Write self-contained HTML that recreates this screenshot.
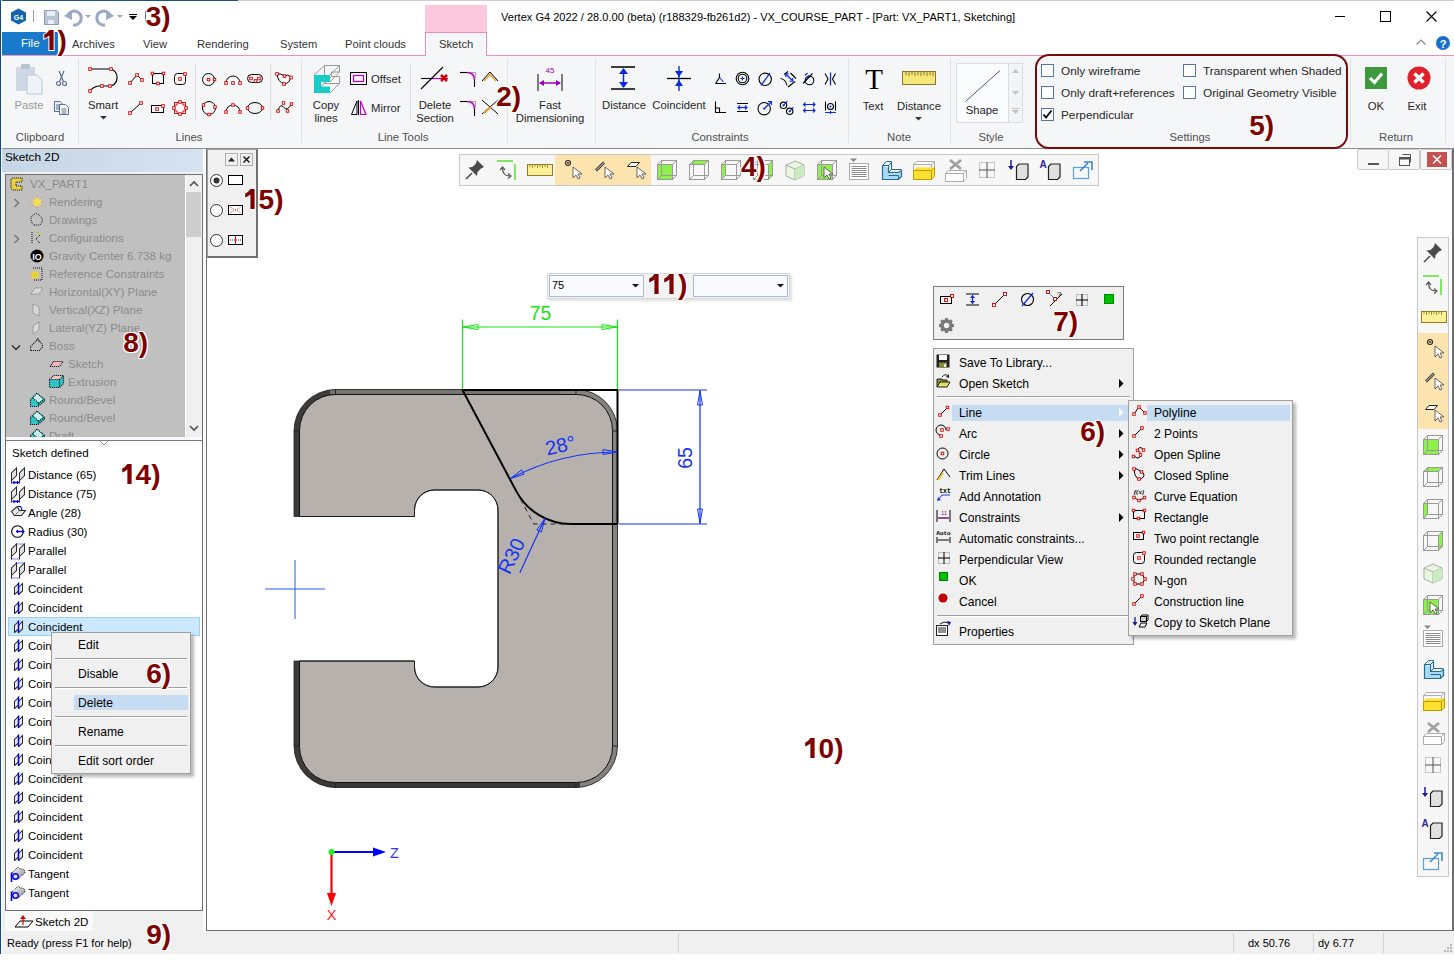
<!DOCTYPE html><html><head><meta charset="utf-8"><style>
*{margin:0;padding:0;box-sizing:border-box}
html,body{width:1454px;height:960px;overflow:hidden;background:#fff;font-family:"Liberation Sans",sans-serif;}
.t{position:absolute;white-space:nowrap;line-height:1;}
.r{position:absolute;}
.s{position:absolute;overflow:visible}
.ann{position:absolute;font-family:"Liberation Sans",sans-serif;font-weight:bold;color:#800000;line-height:1;white-space:nowrap;text-shadow:1px 0 #fff,-1px 0 #fff,0 1px #fff,0 -1px #fff,1px 1px #fff,-1px -1px #fff,1px -1px #fff,-1px 1px #fff}
</style></head><body><div class="r" style="left:0px;top:0px;width:1454px;height:1px;background:#cfcfcf"></div><div class="r" style="left:0px;top:0px;width:238px;height:1px;background:#1b4f8f"></div><div class="r" style="left:0px;top:0px;width:1px;height:956px;background:#0a4a90"></div><div class="r" style="left:1px;top:0px;width:1px;height:956px;background:#ffffff"></div><div class="t" style="left:501px;top:11.65px;font-size:11.05px;color:#000;">Vertex G4 2022 / 28.0.00 (beta) (r188329-fb261d2) - VX_COURSE_PART - [Part: VX_PART1, Sketching]</div><svg class="s" style="left:10px;top:8px;" width="17" height="17" viewBox="0 0 17 17"><polygon points="8.5,0.5 16,4.5 16,12.5 8.5,16.5 1,12.5 1,4.5" fill="#1565b0"/><text x="8.5" y="11.5" font-size="7" font-weight="bold" fill="#fff" text-anchor="middle" font-family="Liberation Sans">G4</text></svg><div class="r" style="left:33px;top:10px;width:1px;height:12px;background:#a0a0a0"></div><svg class="s" style="left:44px;top:10px;" width="15" height="15" viewBox="0 0 15 15"><path d="M0.5 0.5h12l2 2v12h-14z" fill="#b8c4d6" stroke="#8e9db5"/><rect x="3" y="1" width="8" height="5" fill="#e8edf4"/><rect x="4" y="10" width="6" height="4" fill="#e8edf4"/></svg><svg class="s" style="left:64px;top:9px;" width="18" height="17" viewBox="0 0 18 17"><path d="M4 6 A7 7 0 1 1 9 16" fill="none" stroke="#9aaac2" stroke-width="3"/><polygon points="0,7 8,1 8,11" fill="#9aaac2"/></svg><svg class="s" style="left:85px;top:15px;" width="6" height="4" viewBox="0 0 6 4"><polygon points="0,0 6,0 3,3" fill="#a8a8a8"/></svg><svg class="s" style="left:96px;top:9px;" width="18" height="17" viewBox="0 0 18 17"><path d="M14 6 A7 7 0 1 0 9 16" fill="none" stroke="#9aaac2" stroke-width="3"/><polygon points="18,7 10,1 10,11" fill="#9aaac2"/></svg><svg class="s" style="left:117px;top:15px;" width="6" height="4" viewBox="0 0 6 4"><polygon points="0,0 6,0 3,3" fill="#a8a8a8"/></svg><div class="r" style="left:129px;top:14px;width:8px;height:1px;background:#000"></div><svg class="s" style="left:129px;top:16px;" width="8" height="5" viewBox="0 0 8 5"><polygon points="0,0 8,0 4,4" fill="#000"/></svg><div class="r" style="left:145px;top:11px;width:1px;height:11px;background:#666"></div><div class="r" style="left:1335px;top:16px;width:10px;height:1px;background:#000"></div><div class="r" style="left:1380px;top:11px;width:11px;height:11px;border:1px solid #000"></div><svg class="s" style="left:1426px;top:11px;" width="11" height="11" viewBox="0 0 11 11"><path d="M0.5 0.5L10.5 10.5M10.5 0.5L0.5 10.5" stroke="#000" stroke-width="1.1"/></svg><div class="r" style="left:425px;top:5px;width:62px;height:27px;background:#fcc8dd"></div><div class="r" style="left:2px;top:32px;width:56px;height:23px;background:#1979ca"></div><div class="t" style="left:21px;top:38.27px;font-size:11.5px;color:#fff;">File</div><div class="t" style="left:72px;top:38.52px;font-size:11.2px;color:#333;">Archives</div><div class="t" style="left:143px;top:38.52px;font-size:11.2px;color:#333;">View</div><div class="t" style="left:197px;top:38.52px;font-size:11.2px;color:#333;">Rendering</div><div class="t" style="left:280px;top:38.52px;font-size:11.2px;color:#333;">System</div><div class="t" style="left:345px;top:38.52px;font-size:11.2px;color:#333;">Point clouds</div><div class="r" style="left:2px;top:55px;width:424px;height:1px;background:#f38dba"></div><div class="r" style="left:486px;top:55px;width:968px;height:1px;background:#f38dba"></div><div class="r" style="left:425px;top:32px;width:1px;height:24px;background:#f38dba"></div><div class="r" style="left:486px;top:32px;width:1px;height:24px;background:#f38dba"></div><div class="r" style="left:426px;top:33px;width:60px;height:23px;background:#f5f6f7"></div><div class="r" style="left:425px;top:32px;width:62px;height:1px;background:#f38dba"></div><div class="t" style="left:439px;top:38.52px;font-size:11.2px;color:#333;">Sketch</div><svg class="s" style="left:1416px;top:39px;" width="10" height="6" viewBox="0 0 10 6"><path d="M0.5 5.5L5 1L9.5 5.5" fill="none" stroke="#8a8a8a" stroke-width="1.2"/></svg><svg class="s" style="left:1436px;top:36px;" width="14" height="14" viewBox="0 0 14 14"><circle cx="7" cy="7" r="7" fill="#1a6fc9"/><text x="7" y="11.5" font-size="11" font-weight="bold" fill="#fff" text-anchor="middle" font-family="Liberation Sans">?</text></svg><div class="r" style="left:2px;top:56px;width:1452px;height:92px;background:#f5f6f7"></div><div class="r" style="left:2px;top:148px;width:1452px;height:1px;background:#8c8c8c"></div><div class="r" style="left:78px;top:58px;width:1px;height:85px;background:#e2e3e4"></div><div class="r" style="left:301px;top:58px;width:1px;height:85px;background:#e2e3e4"></div><div class="r" style="left:507px;top:58px;width:1px;height:85px;background:#e2e3e4"></div><div class="r" style="left:595px;top:58px;width:1px;height:85px;background:#e2e3e4"></div><div class="r" style="left:848px;top:58px;width:1px;height:85px;background:#e2e3e4"></div><div class="r" style="left:950px;top:58px;width:1px;height:85px;background:#e2e3e4"></div><div class="r" style="left:1350px;top:58px;width:1px;height:85px;background:#e2e3e4"></div><div class="r" style="left:1445px;top:58px;width:1px;height:85px;background:#e2e3e4"></div><div class="r" style="left:195px;top:64px;width:1px;height:56px;background:#dcdcdc"></div><div class="r" style="left:270px;top:64px;width:1px;height:56px;background:#dcdcdc"></div><div class="r" style="left:410px;top:64px;width:1px;height:56px;background:#dcdcdc"></div><div class="t" style="left:-160px;width:400px;text-align:center;top:132.43px;font-size:11.3px;color:#505050;">Clipboard</div><div class="t" style="left:-11px;width:400px;text-align:center;top:132.43px;font-size:11.3px;color:#505050;">Lines</div><div class="t" style="left:203px;width:400px;text-align:center;top:132.43px;font-size:11.3px;color:#505050;">Line Tools</div><div class="t" style="left:520px;width:400px;text-align:center;top:132.43px;font-size:11.3px;color:#505050;">Constraints</div><div class="t" style="left:699px;width:400px;text-align:center;top:132.43px;font-size:11.3px;color:#505050;">Note</div><div class="t" style="left:791px;width:400px;text-align:center;top:132.43px;font-size:11.3px;color:#505050;">Style</div><div class="t" style="left:990px;width:400px;text-align:center;top:132.43px;font-size:11.3px;color:#505050;">Settings</div><div class="t" style="left:1196px;width:400px;text-align:center;top:132.43px;font-size:11.3px;color:#505050;">Return</div><svg class="s" style="left:15px;top:63px;" width="29" height="32" viewBox="0 0 29 32"><rect x="1" y="4" width="19" height="24" rx="1" fill="#cfd8e4"/><rect x="6" y="1" width="9" height="5" rx="1" fill="#b9c4d2"/><path d="M12 12h10l5 5v14h-15z" fill="#f0f4f9" stroke="#b9c4d2"/></svg><div class="t" style="left:-171px;width:400px;text-align:center;top:100.43px;font-size:11.3px;color:#9a9a9a;">Paste</div><svg class="s" style="left:56px;top:71px;" width="11" height="16" viewBox="0 0 11 16"><circle cx="2.5" cy="12.5" r="2" fill="none" stroke="#5a6f94" stroke-width="1.2"/><circle cx="8.5" cy="12.5" r="2" fill="none" stroke="#5a6f94" stroke-width="1.2"/><path d="M3.5 10.5L8 0M7.5 10.5L3 0" stroke="#5a6f94" stroke-width="1.2"/></svg><svg class="s" style="left:54px;top:101px;" width="16" height="14" viewBox="0 0 16 14"><path d="M0.5 0.5H6L8.5 3V10.5H0.5Z" fill="#eef2f7" stroke="#5a6f94"/><path d="M2 4H5M2 6H6M2 8H6" stroke="#5a6f94"/><path d="M5.5 3.5H11.5L14.5 6.5V13.5H5.5Z" fill="#fff" stroke="#5a6f94"/><path d="M7.5 8H12.5M7.5 10H12.5M7.5 12H12.5" stroke="#5a6f94"/></svg><svg class="s" style="left:88px;top:66px;" width="32" height="28" viewBox="0 0 32 28"><path d="M2 3H23 A9 9 0 0 1 23 20 H10 Q5 21 2 25" fill="none" stroke="#000" stroke-width="1.2"/><rect x="0.7" y="1.7" width="2.6" height="2.6" fill="#fff" stroke="#d10000" stroke-width="0.9"/><rect x="21.7" y="1.7" width="2.6" height="2.6" fill="#fff" stroke="#d10000" stroke-width="0.9"/><rect x="0.7" y="23.7" width="2.6" height="2.6" fill="#fff" stroke="#d10000" stroke-width="0.9"/><rect x="12.7" y="18.7" width="2.6" height="2.6" fill="#fff" stroke="#d10000" stroke-width="0.9"/><rect x="20.7" y="18.7" width="2.6" height="2.6" fill="#fff" stroke="#d10000" stroke-width="0.9"/></svg><div class="t" style="left:-97px;width:400px;text-align:center;top:100.43px;font-size:11.3px;color:#262626;">Smart</div><svg class="s" style="left:100px;top:116px;" width="7" height="4" viewBox="0 0 7 4"><polygon points="0,0 7,0 3.5,3.5" fill="#333"/></svg><svg class="s" style="left:128px;top:73px;" width="16" height="12" viewBox="0 0 16 12"><path d="M2 10L9 2L14 7" fill="none" stroke="#000"/><rect x="0.7" y="8.7" width="2.6" height="2.6" fill="#fff" stroke="#d10000" stroke-width="0.9"/><rect x="7.7" y="0.7" width="2.6" height="2.6" fill="#fff" stroke="#d10000" stroke-width="0.9"/><rect x="12.7" y="5.7" width="2.6" height="2.6" fill="#fff" stroke="#d10000" stroke-width="0.9"/></svg><svg class="s" style="left:151px;top:72px;" width="14" height="14" viewBox="0 0 14 14"><rect x="1.5" y="1.5" width="11" height="10" fill="none" stroke="#000"/><rect x="0.19999999999999996" y="0.19999999999999996" width="2.6" height="2.6" fill="#fff" stroke="#d10000" stroke-width="0.9"/><rect x="11.2" y="0.19999999999999996" width="2.6" height="2.6" fill="#fff" stroke="#d10000" stroke-width="0.9"/><rect x="5.7" y="10.2" width="2.6" height="2.6" fill="#fff" stroke="#d10000" stroke-width="0.9"/></svg><svg class="s" style="left:173px;top:72px;" width="14" height="14" viewBox="0 0 14 14"><rect x="1.5" y="1.5" width="11" height="11" rx="3" fill="none" stroke="#000"/><rect x="5.7" y="5.7" width="2.6" height="2.6" fill="#fff" stroke="#d10000" stroke-width="0.9"/><rect x="10.7" y="0.7" width="2.6" height="2.6" fill="#fff" stroke="#d10000" stroke-width="0.9"/></svg><svg class="s" style="left:201px;top:72px;" width="15" height="15" viewBox="0 0 15 15"><circle cx="7.5" cy="7.5" r="6" fill="none" stroke="#000"/><rect x="6.25" y="6.25" width="2.5" height="2.5" fill="#fff" stroke="#d10000" stroke-width="0.9"/><rect x="12.25" y="6.25" width="2.5" height="2.5" fill="#fff" stroke="#d10000" stroke-width="0.9"/></svg><svg class="s" style="left:224px;top:73px;" width="18" height="12" viewBox="0 0 18 12"><path d="M2 10A7 7 0 0 1 16 10" fill="none" stroke="#000"/><rect x="0.7" y="8.7" width="2.6" height="2.6" fill="#fff" stroke="#d10000" stroke-width="0.9"/><rect x="7.7" y="8.7" width="2.6" height="2.6" fill="#fff" stroke="#d10000" stroke-width="0.9"/><rect x="14.7" y="8.7" width="2.6" height="2.6" fill="#fff" stroke="#d10000" stroke-width="0.9"/></svg><svg class="s" style="left:246px;top:72px;" width="18" height="13" viewBox="0 0 18 13"><rect x="1.5" y="2.5" width="15" height="8" rx="4" fill="none" stroke="#000"/><rect x="3.7" y="5.2" width="2.6" height="2.6" fill="#fff" stroke="#d10000" stroke-width="0.9"/><rect x="8.2" y="7.7" width="2.6" height="2.6" fill="#fff" stroke="#d10000" stroke-width="0.9"/><rect x="11.7" y="5.2" width="2.6" height="2.6" fill="#fff" stroke="#d10000" stroke-width="0.9"/></svg><svg class="s" style="left:275px;top:71px;" width="18" height="16" viewBox="0 0 18 16"><path d="M2 3Q6 2 9 5Q13 3 16 6Q14 13 9 13Q3 11 2 3Z" fill="none" stroke="#000"/><rect x="0.7" y="1.7" width="2.6" height="2.6" fill="#fff" stroke="#d10000" stroke-width="0.9"/><rect x="8.2" y="3.7" width="2.6" height="2.6" fill="#fff" stroke="#d10000" stroke-width="0.9"/><rect x="14.7" y="5.2" width="2.6" height="2.6" fill="#fff" stroke="#d10000" stroke-width="0.9"/><rect x="7.7" y="11.7" width="2.6" height="2.6" fill="#fff" stroke="#d10000" stroke-width="0.9"/></svg><svg class="s" style="left:128px;top:101px;" width="16" height="14" viewBox="0 0 16 14"><path d="M2 12L13 2" stroke="#000"/><rect x="0.7" y="10.7" width="2.6" height="2.6" fill="#fff" stroke="#d10000" stroke-width="0.9"/><rect x="11.7" y="0.7" width="2.6" height="2.6" fill="#fff" stroke="#d10000" stroke-width="0.9"/></svg><svg class="s" style="left:150px;top:104px;" width="16" height="10" viewBox="0 0 16 10"><rect x="1.5" y="1.5" width="12" height="7" fill="none" stroke="#000"/><rect x="5.7" y="3.7" width="2.6" height="2.6" fill="#fff" stroke="#d10000" stroke-width="0.9"/><rect x="11.7" y="0.7" width="2.6" height="2.6" fill="#fff" stroke="#d10000" stroke-width="0.9"/></svg><svg class="s" style="left:172px;top:100px;" width="16" height="16" viewBox="0 0 16 16"><circle cx="8" cy="8" r="6" fill="none" stroke="#000"/><rect x="12.75" y="6.75" width="2.5" height="2.5" fill="#fff" stroke="#d10000" stroke-width="0.9"/><rect x="10.992632895067418" y="10.992648479156841" width="2.5" height="2.5" fill="#fff" stroke="#d10000" stroke-width="0.9"/><rect x="6.74997796076938" y="12.749999999959522" width="2.5" height="2.5" fill="#fff" stroke="#d10000" stroke-width="0.9"/><rect x="2.5073359368109793" y="10.992617310920751" width="2.5" height="2.5" fill="#fff" stroke="#d10000" stroke-width="0.9"/><rect x="0.7500000001619096" y="6.74995592153876" width="2.5" height="2.5" fill="#fff" stroke="#d10000" stroke-width="0.9"/><rect x="2.50739827328316" y="2.507320352836042" width="2.5" height="2.5" fill="#fff" stroke="#d10000" stroke-width="0.9"/><rect x="6.750066117691858" y="0.7500000003642961" width="2.5" height="2.5" fill="#fff" stroke="#d10000" stroke-width="0.9"/><rect x="10.99269523108165" y="2.5074138575443126" width="2.5" height="2.5" fill="#fff" stroke="#d10000" stroke-width="0.9"/></svg><svg class="s" style="left:201px;top:100px;" width="16" height="16" viewBox="0 0 16 16"><circle cx="8" cy="8" r="6.5" fill="none" stroke="#000"/><rect x="1.25" y="3.75" width="2.5" height="2.5" fill="#fff" stroke="#d10000" stroke-width="0.9"/><rect x="6.75" y="13.25" width="2.5" height="2.5" fill="#fff" stroke="#d10000" stroke-width="0.9"/><rect x="12.75" y="5.75" width="2.5" height="2.5" fill="#fff" stroke="#d10000" stroke-width="0.9"/></svg><svg class="s" style="left:224px;top:102px;" width="18" height="12" viewBox="0 0 18 12"><path d="M2 10A7 7 0 0 1 16 10" fill="none" stroke="#000"/><rect x="0.75" y="8.75" width="2.5" height="2.5" fill="#fff" stroke="#d10000" stroke-width="0.9"/><rect x="7.75" y="1.75" width="2.5" height="2.5" fill="#fff" stroke="#d10000" stroke-width="0.9"/><rect x="14.75" y="8.75" width="2.5" height="2.5" fill="#fff" stroke="#d10000" stroke-width="0.9"/></svg><svg class="s" style="left:246px;top:101px;" width="18" height="14" viewBox="0 0 18 14"><ellipse cx="9" cy="7" rx="7.5" ry="5.5" fill="none" stroke="#000"/><rect x="0.25" y="5.75" width="2.5" height="2.5" fill="#fff" stroke="#d10000" stroke-width="0.9"/><rect x="15.25" y="5.75" width="2.5" height="2.5" fill="#fff" stroke="#d10000" stroke-width="0.9"/></svg><svg class="s" style="left:276px;top:100px;" width="18" height="16" viewBox="0 0 18 16"><path d="M2 11Q4 3 7.5 7Q11 12 15.5 4" fill="none" stroke="#000"/><rect x="0.75" y="9.75" width="2.5" height="2.5" fill="#fff" stroke="#d10000" stroke-width="0.9"/><rect x="6.25" y="1.75" width="2.5" height="2.5" fill="#fff" stroke="#d10000" stroke-width="0.9"/><rect x="10.25" y="9.75" width="2.5" height="2.5" fill="#fff" stroke="#d10000" stroke-width="0.9"/><rect x="14.25" y="2.75" width="2.5" height="2.5" fill="#fff" stroke="#d10000" stroke-width="0.9"/></svg><svg class="s" style="left:312px;top:64px;" width="30" height="31" viewBox="0 0 30 31"><path d="M12.5 1.5H27.5V8H19.5V12.5H27.5V19.5H12.5Z" fill="none" stroke="#9a9a9a"/><path d="M2 11L12.5 1.5M18 11L27.5 1.5M18 29L27.5 19.5M9 22.5L19.5 12.5M18 18L27.5 8" stroke="#9a9a9a"/><path d="M2 11H18V18H9V22.5H18V29H2Z" fill="#18cdc8"/></svg><div class="t" style="left:126px;width:400px;text-align:center;top:99.93px;font-size:11.3px;color:#262626;">Copy</div><div class="t" style="left:126px;width:400px;text-align:center;top:112.93px;font-size:11.3px;color:#262626;">lines</div><svg class="s" style="left:350px;top:72px;" width="18" height="14" viewBox="0 0 18 14"><rect x="0.5" y="0.5" width="16" height="12" fill="none" stroke="#000"/><rect x="3.5" y="3.5" width="10" height="6" fill="none" stroke="#c000c0" stroke-width="1.2"/></svg><div class="t" style="left:371px;top:74.43px;font-size:11.3px;color:#262626;">Offset</div><svg class="s" style="left:351px;top:100px;" width="16" height="15" viewBox="0 0 16 15"><path d="M0.5 14.5L6 1V14.5Z" fill="none" stroke="#000"/><path d="M7.5 0V15" stroke="#000"/><path d="M9.5 1L15 14.5H9.5Z" fill="none" stroke="#c000c0" stroke-width="1.2"/></svg><div class="t" style="left:371px;top:103.43px;font-size:11.3px;color:#262626;">Mirror</div><svg class="s" style="left:420px;top:66px;" width="30" height="24" viewBox="0 0 30 24"><path d="M1 12.5H11" stroke="#000" stroke-width="1.1"/><path d="M11 12.5H28" stroke="#c000c0" stroke-width="1.2"/><path d="M1 23L23 1" stroke="#000" stroke-width="1.1"/><path d="M21 9L27 15M27 9L21 15" stroke="#d00000" stroke-width="2.6"/></svg><div class="t" style="left:235px;width:400px;text-align:center;top:99.93px;font-size:11.3px;color:#262626;">Delete</div><div class="t" style="left:235px;width:400px;text-align:center;top:112.93px;font-size:11.3px;color:#262626;">Section</div><svg class="s" style="left:460px;top:71px;" width="17" height="17" viewBox="0 0 17 17"><path d="M0 1.5H7" stroke="#000" stroke-width="1.1"/><path d="M7 1.5H15.5V7" fill="none" stroke="#a0a0a0"/><path d="M7 1.5Q14.5 1.5 14.5 9" fill="none" stroke="#c000c0" stroke-width="1.6"/><path d="M14.5 9V16" stroke="#000" stroke-width="1.1"/></svg><svg class="s" style="left:460px;top:100px;" width="17" height="17" viewBox="0 0 17 17"><path d="M0 1.5H7" stroke="#000" stroke-width="1.1"/><path d="M7 1.5H15.5V7" fill="none" stroke="#a0a0a0"/><path d="M7 1.5Q14.5 1.5 14.5 9" fill="none" stroke="#c000c0" stroke-width="1.6"/><path d="M14.5 9V16" stroke="#000" stroke-width="1.1"/></svg><svg class="s" style="left:481px;top:70px;" width="18" height="12" viewBox="0 0 18 12"><path d="M1 11L9 2L17 11" fill="none" stroke="#000"/><path d="M3 11L9 4.5L15 11" fill="none" stroke="#f0a020" stroke-width="1.5"/></svg><svg class="s" style="left:481px;top:99px;" width="18" height="16" viewBox="0 0 18 16"><path d="M1 1L17 15M17 1L1 15" fill="none" stroke="#000"/><path d="M3 14L10 8" stroke="#f0a020" stroke-width="2"/></svg><svg class="s" style="left:537px;top:66px;" width="26" height="25" viewBox="0 0 26 25"><path d="M1 8V25M25 8V25" stroke="#000"/><path d="M3 17H23" stroke="#9b00c0" stroke-width="1.5"/><polygon points="2,17 7,14 7,20" fill="#9b00c0"/><polygon points="24,17 19,14 19,20" fill="#9b00c0"/><text x="13" y="7" font-size="8" fill="#9b00c0" text-anchor="middle" font-family="Liberation Sans">45</text></svg><div class="t" style="left:350px;width:400px;text-align:center;top:99.93px;font-size:11.3px;color:#262626;">Fast</div><div class="t" style="left:350px;width:400px;text-align:center;top:112.93px;font-size:11.3px;color:#262626;">Dimensioning</div><svg class="s" style="left:611px;top:66px;" width="25" height="24" viewBox="0 0 25 24"><path d="M0 1H24M0 23H24" stroke="#000" stroke-width="1.3"/><path d="M12.5 3V21" stroke="#0a28e6" stroke-width="1.5"/><polygon points="12.5,2 8,8 17,8" fill="#0a28e6"/><polygon points="12.5,22 8,16 17,16" fill="#0a28e6"/></svg><div class="t" style="left:424px;width:400px;text-align:center;top:99.93px;font-size:11.3px;color:#262626;">Distance</div><svg class="s" style="left:667px;top:66px;" width="24" height="25" viewBox="0 0 24 25"><path d="M0 12.5H24" stroke="#000" stroke-width="1.3"/><path d="M12 0V25" stroke="#0a28e6" stroke-width="1.4"/><polygon points="12,11 8,5 16,5" fill="#0a28e6"/><polygon points="12,14 8,20 16,20" fill="#0a28e6"/></svg><div class="t" style="left:479px;width:400px;text-align:center;top:99.93px;font-size:11.3px;color:#262626;">Coincident</div><svg class="s" style="left:0;top:0" width="1454" height="150" viewBox="0 0 1454 150"><path d="M715.5 83.5H726 M715.5 83.5L719.5 77.5V73.5" fill="none" stroke="#000" stroke-width="1.1"/><path d="M719.5 77.5L723.5 82" stroke="#0a28e6" stroke-width="1.1"/><circle cx="742.5" cy="78.5" r="6.3" fill="none" stroke="#000" stroke-width="1.1"/><circle cx="742.5" cy="78.5" r="4.3" fill="none" stroke="#000" stroke-width="1.1"/><path d="M742.5 76.5V80.5M740.5 78.5H744.5" stroke="#0a28e6" stroke-width="1.2"/><circle cx="765.2" cy="79.3" r="6.2" fill="none" stroke="#000" stroke-width="1.1"/><path d="M761 85.5L770 73" stroke="#0a28e6" stroke-width="1.2"/><path d="M780.5 78.5Q785.5 79 787 85.5M784 74.5L788 71.5M788 87L795 81.5M790.5 73L796 78.5" fill="none" stroke="#000" stroke-width="1.1"/><path d="M786 74.5L792.5 80.5" stroke="#0a28e6" stroke-width="1.2"/><path d="M785.5 73.5L789 74M785.5 73.5L786 77M793 81.5L789.5 81M793 81.5L792.5 78" stroke="#0a28e6" stroke-width="1.1"/><circle cx="809.5" cy="80.5" r="4.3" fill="none" stroke="#000" stroke-width="1.1"/><path d="M803 83.5L812.5 73.5" stroke="#000" stroke-width="1.1"/><path d="M805 75.5L807.5 73M806.5 78L809 75.5" stroke="#0a28e6" stroke-width="1.1"/><path d="M825 73.5L828 79L825 84.5M835.5 73.5L832.5 79L835.5 84.5" fill="none" stroke="#000" stroke-width="1.1"/><path d="M830.5 72.5V85.5" stroke="#0a28e6" stroke-width="1.3"/><path d="M715.5 101.5V112.5H726M715.5 108H719.5V112.5" fill="none" stroke="#000" stroke-width="1.1"/><path d="M737 103.5H748M737 111.5H748" stroke="#000" stroke-width="1.1"/><path d="M738 107.5H747" stroke="#0a28e6" stroke-width="1.2"/><path d="M740 105.5L738 107.5L740 109.5M745 105.5L747 107.5L745 109.5" fill="none" stroke="#0a28e6" stroke-width="1.1"/><circle cx="764.2" cy="108.7" r="6.2" fill="none" stroke="#000" stroke-width="1.1"/><path d="M764.2 108.7L771.5 101.5" stroke="#0a28e6" stroke-width="1.2"/><path d="M768 101.5H771.5V105" fill="none" stroke="#0a28e6" stroke-width="1.1"/><circle cx="764.2" cy="108.7" r="1" fill="#0a28e6"/><circle cx="783.5" cy="105.3" r="3.2" fill="none" stroke="#000" stroke-width="1.1"/><circle cx="789.7" cy="111.3" r="3.2" fill="none" stroke="#000" stroke-width="1.1"/><circle cx="783.5" cy="105.3" r="1.1" fill="#0a28e6"/><circle cx="789.7" cy="111.3" r="1.1" fill="#0a28e6"/><path d="M783.5 105.3L787.5 101M789.7 111.3L793.5 107" stroke="#0a28e6" stroke-width="1.1"/><path d="M803.5 104.5H815M803.5 110.5H815" stroke="#0a28e6" stroke-width="1.2"/><path d="M805.5 102.5L803.5 104.5L805.5 106.5M813 102.5L815 104.5L813 106.5M805.5 108.5L803.5 110.5L805.5 112.5M813 108.5L815 110.5L813 112.5" fill="none" stroke="#0a28e6" stroke-width="1.1"/><path d="M825.5 101.5V110.5M835.5 101.5V110.5" stroke="#000" stroke-width="1.1"/><circle cx="830.5" cy="106.5" r="3" fill="none" stroke="#000" stroke-width="1.1"/><circle cx="830.5" cy="106.5" r="1" fill="#0a28e6"/><path d="M825 112.5H836M830.5 111V114" stroke="#0a28e6" stroke-width="1.2"/></svg><svg class="s" style="left:864px;top:67px;" width="20" height="23" viewBox="0 0 20 23"><text x="10" y="22" font-size="29" font-family="Liberation Serif" text-anchor="middle" fill="#000">T</text></svg><div class="t" style="left:673px;width:400px;text-align:center;top:100.93px;font-size:11.3px;color:#262626;">Text</div><svg class="s" style="left:902px;top:71px;" width="34" height="15" viewBox="0 0 34 15"><rect x="0.5" y="0.5" width="33" height="13" fill="#f5e67a" stroke="#8a7a20"/><path d="M4 1V4" stroke="#8a7a20"/><path d="M7 1V5" stroke="#8a7a20"/><path d="M10 1V4" stroke="#8a7a20"/><path d="M13 1V5" stroke="#8a7a20"/><path d="M16 1V4" stroke="#8a7a20"/><path d="M19 1V5" stroke="#8a7a20"/><path d="M22 1V4" stroke="#8a7a20"/><path d="M25 1V5" stroke="#8a7a20"/><path d="M28 1V4" stroke="#8a7a20"/><path d="M31 1V5" stroke="#8a7a20"/></svg><div class="t" style="left:719px;width:400px;text-align:center;top:100.93px;font-size:11.3px;color:#262626;">Distance</div><svg class="s" style="left:915px;top:117px;" width="7" height="4" viewBox="0 0 7 4"><polygon points="0,0 7,0 3.5,3.5" fill="#333"/></svg><div class="r" style="left:956px;top:63px;width:53px;height:60px;background:#fafbfc;border:1px solid #dadcdf"></div><svg class="s" style="left:965px;top:70px;" width="36" height="32" viewBox="0 0 36 32"><path d="M0.5 31.5L35 0.5" stroke="#4a5a8a" stroke-width="1"/></svg><div class="t" style="left:782px;width:400px;text-align:center;top:104.93px;font-size:11.3px;color:#262626;">Shape</div><div class="r" style="left:1009px;top:63px;width:14px;height:60px;background:#f3f4f5;border:1px solid #dadcdf;border-left:none"></div><svg class="s" style="left:1012px;top:69px;" width="8" height="5" viewBox="0 0 8 5"><polygon points="0,4 7,4 3.5,0" fill="#c0c4c8"/></svg><svg class="s" style="left:1012px;top:91px;" width="8" height="5" viewBox="0 0 8 5"><polygon points="0,0 7,0 3.5,4" fill="#c0c4c8"/></svg><svg class="s" style="left:1012px;top:108px;" width="8" height="7" viewBox="0 0 8 7"><path d="M0 0.5H7" stroke="#c0c4c8"/><polygon points="0,2 7,2 3.5,6" fill="#c0c4c8"/></svg><svg class="s" style="left:1041px;top:64px;" width="13" height="13" viewBox="0 0 13 13"><rect x="0.5" y="0.5" width="12" height="12" fill="#fff" stroke="#5577a8"/></svg><div class="t" style="left:1061px;top:66.01px;font-size:11.8px;color:#262626;">Only wireframe</div><svg class="s" style="left:1041px;top:86px;" width="13" height="13" viewBox="0 0 13 13"><rect x="0.5" y="0.5" width="12" height="12" fill="#fff" stroke="#5577a8"/></svg><div class="t" style="left:1061px;top:88.01px;font-size:11.8px;color:#262626;">Only draft+references</div><svg class="s" style="left:1041px;top:108px;" width="13" height="13" viewBox="0 0 13 13"><rect x="0.5" y="0.5" width="12" height="12" fill="#fff" stroke="#5577a8"/><path d="M2.5 6.5L5 9.5L10.5 2.5" fill="none" stroke="#000" stroke-width="1.8"/></svg><div class="t" style="left:1061px;top:110.01px;font-size:11.8px;color:#262626;">Perpendicular</div><svg class="s" style="left:1183px;top:64px;" width="13" height="13" viewBox="0 0 13 13"><rect x="0.5" y="0.5" width="12" height="12" fill="#fff" stroke="#5577a8"/></svg><div class="t" style="left:1203px;top:66.01px;font-size:11.8px;color:#262626;">Transparent when Shaded</div><svg class="s" style="left:1183px;top:86px;" width="13" height="13" viewBox="0 0 13 13"><rect x="0.5" y="0.5" width="12" height="12" fill="#fff" stroke="#5577a8"/></svg><div class="t" style="left:1203px;top:88.01px;font-size:11.8px;color:#262626;">Original Geometry Visible</div><div class="r" style="left:1035px;top:54px;width:313px;height:95px;border:2.5px solid #7a0a0a;border-radius:14px"></div><svg class="s" style="left:1365px;top:67px;" width="22" height="22" viewBox="0 0 22 22"><rect width="22" height="22" fill="#3c9a3c"/><path d="M5 11L9.5 15.5L17 6.5" fill="none" stroke="#fff" stroke-width="3"/></svg><div class="t" style="left:1176px;width:400px;text-align:center;top:100.93px;font-size:11.3px;color:#262626;">OK</div><svg class="s" style="left:1407px;top:66px;" width="24" height="24" viewBox="0 0 24 24"><circle cx="12" cy="12" r="11.5" fill="#e0202a"/><path d="M7.5 7.5L16.5 16.5M16.5 7.5L7.5 16.5" stroke="#fff" stroke-width="3.5"/></svg><div class="t" style="left:1217px;width:400px;text-align:center;top:100.93px;font-size:11.3px;color:#262626;">Exit</div><div class="r" style="left:2px;top:149px;width:204px;height:782px;background:#f0f0f0"></div><div class="r" style="left:2px;top:149px;width:204px;height:23px;background:linear-gradient(to right,#c7d6e4,#d6e3f0)"></div><div class="t" style="left:5px;top:152.01px;font-size:11.8px;color:#000;">Sketch 2D</div><div class="r" style="left:5px;top:174px;width:198px;height:737px;background:#fff;border:1px solid #6e6e6e"></div><div class="r" style="left:6px;top:175px;width:179px;height:262px;background:#c0c0c0"></div><div class="r" style="left:185px;top:175px;width:1px;height:262px;background:#fff"></div><div class="r" style="left:186px;top:175px;width:16px;height:262px;background:#f0f0f0"></div><div class="r" style="left:186px;top:192px;width:15px;height:45px;background:#cdcdcd"></div><svg class="s" style="left:189px;top:181px;" width="10" height="6" viewBox="0 0 10 6"><path d="M1 5L5 1L9 5" fill="none" stroke="#505050" stroke-width="1.6"/></svg><svg class="s" style="left:189px;top:425px;" width="10" height="6" viewBox="0 0 10 6"><path d="M1 1L5 5L9 1" fill="none" stroke="#505050" stroke-width="1.6"/></svg><div class="r" style="left:6px;top:437px;width:196px;height:3px;background:#f8faff"></div><div class="r" style="left:6px;top:440px;width:196px;height:1px;background:#7a7a7a"></div><div class="r" style="left:203px;top:149px;width:3px;height:782px;background:#fafafa"></div><div style="position:absolute;left:6px;top:175px;width:179px;height:262px;overflow:hidden"><div style="position:absolute;left:-6px;top:-175px;width:300px;height:600px"><div class="t" style="left:30px;top:178.18px;font-size:11.6px;color:#8b8b8b;">VX_PART1</div><svg class="s" style="left:10px;top:177px;" width="14" height="14" viewBox="0 0 14 14"><path d="M1 3Q1 1 3 1H12V5H6V9H12V13H3Q1 13 1 11Z" fill="#e8d040" stroke="#000" stroke-dasharray="1 1"/></svg><div class="t" style="left:49px;top:196.18px;font-size:11.6px;color:#8b8b8b;">Rendering</div><svg class="s" style="left:13px;top:198px;" width="7" height="10" viewBox="0 0 7 10"><path d="M1.5 1L5.5 5L1.5 9" fill="none" stroke="#777" stroke-width="1.5"/></svg><svg class="s" style="left:30px;top:195px;" width="14" height="14" viewBox="0 0 14 14"><circle cx="7" cy="7" r="4" fill="#f8e860"/><path d="M7 0V14M0 7H14M2 2L12 12M12 2L2 12" stroke="#f49050" stroke-dasharray="1.5 1.5"/><circle cx="7" cy="7" r="3.5" fill="#f0e050"/></svg><div class="t" style="left:49px;top:214.18px;font-size:11.6px;color:#8b8b8b;">Drawings</div><svg class="s" style="left:30px;top:213px;" width="13" height="13" viewBox="0 0 13 13"><path d="M2 10Q0 6 2 3Q5 0 8 1L12 5Q13 9 10 12H4Z" fill="none" stroke="#000" stroke-dasharray="1 1"/></svg><div class="t" style="left:49px;top:232.18px;font-size:11.6px;color:#8b8b8b;">Configurations</div><svg class="s" style="left:13px;top:234px;" width="7" height="10" viewBox="0 0 7 10"><path d="M1.5 1L5.5 5L1.5 9" fill="none" stroke="#777" stroke-width="1.5"/></svg><svg class="s" style="left:30px;top:231px;" width="13" height="14" viewBox="0 0 13 14"><path d="M2 1V13M8 1L10 4L6 8L10 12" fill="none" stroke="#000" stroke-dasharray="1 1"/><circle cx="9" cy="2.5" r="1.5" fill="#e0d040"/></svg><div class="t" style="left:49px;top:250.18px;font-size:11.6px;color:#8b8b8b;">Gravity Center 6.738 kg</div><svg class="s" style="left:30px;top:249px;" width="14" height="14" viewBox="0 0 14 14"><circle cx="7" cy="7" r="6.5" fill="#000"/><text x="7" y="10.5" font-size="9" font-weight="bold" fill="#fff" text-anchor="middle" font-family="Liberation Sans">IO</text></svg><div class="t" style="left:49px;top:268.18px;font-size:11.6px;color:#8b8b8b;">Reference Constraints</div><svg class="s" style="left:30px;top:267px;" width="14" height="14" viewBox="0 0 14 14"><circle cx="5" cy="8" r="4" fill="#e8d040"/><path d="M3 1H12V13H3" fill="none" stroke="#000" stroke-dasharray="1 1"/></svg><div class="t" style="left:49px;top:286.18px;font-size:11.6px;color:#8b8b8b;">Horizontal(XY) Plane</div><svg class="s" style="left:30px;top:287px;" width="14" height="8" viewBox="0 0 14 8"><path d="M1 7L5 1H13L9 7Z" fill="#d8d8d8" stroke="#777" stroke-dasharray="1 1"/></svg><div class="t" style="left:49px;top:304.18px;font-size:11.6px;color:#8b8b8b;">Vertical(XZ) Plane</div><svg class="s" style="left:32px;top:303px;" width="8" height="14" viewBox="0 0 8 14"><path d="M1 1L7 4V13L1 10Z" fill="#d8d8d8" stroke="#777" stroke-dasharray="1 1"/></svg><div class="t" style="left:49px;top:322.18px;font-size:11.6px;color:#8b8b8b;">Lateral(YZ) Plane</div><svg class="s" style="left:32px;top:321px;" width="8" height="14" viewBox="0 0 8 14"><path d="M7 1L1 5V13L7 9Z" fill="#d8d8d8" stroke="#777" stroke-dasharray="1 1"/></svg><div class="t" style="left:49px;top:340.18px;font-size:11.6px;color:#8b8b8b;">Boss</div><svg class="s" style="left:11px;top:344px;" width="10" height="7" viewBox="0 0 10 7"><path d="M1 1.5L5 5.5L9 1.5" fill="none" stroke="#333" stroke-width="1.5"/></svg><svg class="s" style="left:29px;top:338px;" width="15" height="14" viewBox="0 0 15 14"><path d="M1.5 12.5V8.5L7.5 2.5L9 0.5M9 0.5L10.5 3.5Q13.5 5 13.5 9L10.5 12.5H1.5" fill="none" stroke="#000" stroke-width="1.1" stroke-dasharray="1 1"/><path d="M8 1.5L11 4.5" stroke="#000" stroke-dasharray="1 1"/></svg><div class="t" style="left:68px;top:358.18px;font-size:11.6px;color:#8b8b8b;">Sketch</div><svg class="s" style="left:49px;top:360px;" width="15" height="8" viewBox="0 0 15 8"><path d="M1 6.5L4.5 1.5H14L10.5 6.5Z" fill="#f0b8b8" stroke="#000" stroke-width="1.1" stroke-dasharray="1 1"/></svg><div class="t" style="left:68px;top:376.18px;font-size:11.6px;color:#8b8b8b;">Extrusion</div><svg class="s" style="left:49px;top:374px;" width="15" height="15" viewBox="0 0 15 15"><path d="M0.5 5.5L4.5 1.5H14.5V9.5L10.5 13.5H0.5Z" fill="#30c4c8"/><path d="M0.5 5.5L4.5 1.5H14.5L10.5 5.5Z" fill="#f4c4c4"/><path d="M0.5 5.5L4.5 1.5H14.5V9.5L10.5 13.5H0.5Z M0.5 5.5H10.5V13.5M10.5 5.5L14.5 1.5" fill="none" stroke="#000" stroke-width="1.1" stroke-dasharray="1 1"/></svg><div class="t" style="left:49px;top:394.18px;font-size:11.6px;color:#8b8b8b;">Round/Bevel</div><svg class="s" style="left:30px;top:392px;" width="15" height="15" viewBox="0 0 15 15"><path d="M0.5 7.5L7 1L14.5 7.5V9L8 14.5H0.5Z" fill="#30c4c8"/><path d="M3 6L7 2L12.5 7L8.5 11Z" fill="#e0f8f8"/><path d="M4.5 6L7 3.5L10.5 7L8 9.5Z" fill="#c8e8e8"/><path d="M0.5 7.5L7 1L14.5 7.5V9L8 14.5H0.5Z M3 6L8.5 11V14.5M8.5 11L14.5 7.5" fill="none" stroke="#000" stroke-width="1.1" stroke-dasharray="1 1"/></svg><div class="t" style="left:49px;top:412.18px;font-size:11.6px;color:#8b8b8b;">Round/Bevel</div><svg class="s" style="left:30px;top:410px;" width="15" height="15" viewBox="0 0 15 15"><path d="M0.5 7.5L7 1L14.5 7.5V9L8 14.5H0.5Z" fill="#30c4c8"/><path d="M3 6L7 2L12.5 7L8.5 11Z" fill="#e0f8f8"/><path d="M4.5 6L7 3.5L10.5 7L8 9.5Z" fill="#c8e8e8"/><path d="M0.5 7.5L7 1L14.5 7.5V9L8 14.5H0.5Z M3 6L8.5 11V14.5M8.5 11L14.5 7.5" fill="none" stroke="#000" stroke-width="1.1" stroke-dasharray="1 1"/></svg><div class="t" style="left:49px;top:430.18px;font-size:11.6px;color:#8b8b8b;">Draft</div><svg class="s" style="left:30px;top:428px;" width="15" height="15" viewBox="0 0 15 15"><path d="M0.5 7.5L7 1L14.5 7.5V9L8 14.5H0.5Z" fill="#30c4c8"/><path d="M3 6L7 2L12.5 7L8.5 11Z" fill="#e0f8f8"/><path d="M4.5 6L7 3.5L10.5 7L8 9.5Z" fill="#c8e8e8"/><path d="M0.5 7.5L7 1L14.5 7.5V9L8 14.5H0.5Z M3 6L8.5 11V14.5M8.5 11L14.5 7.5" fill="none" stroke="#000" stroke-width="1.1" stroke-dasharray="1 1"/></svg></div></div><svg class="s" style="left:99px;top:440px;" width="10" height="6" viewBox="0 0 10 6"><path d="M1 1L5 5L9 1" fill="none" stroke="#999" stroke-width="1"/></svg><div class="t" style="left:12px;top:447.18px;font-size:11.6px;color:#000;">Sketch defined</div><div class="r" style="left:8px;top:617px;width:192px;height:19px;background:#cce8ff;border:1px solid #99d1ff"></div><div class="t" style="left:28px;top:470.07px;font-size:11.5px;color:#000;">Distance (65)</div><svg class="s" style="left:10px;top:466px;" width="18" height="18" viewBox="0 0 18 18"><path d="M1.5 7L6.5 2V9.5L1.5 14.5Z" fill="#e6e6e6"/><path d="M1.5 17.5V7L6.5 2V9.5L1.5 14.5" fill="none" stroke="#2a2a2a" stroke-width="1.05"/><path d="M9.5 7L14.5 2V9.5L9.5 14.5Z" fill="#e6e6e6"/><path d="M9.5 17.5V7L14.5 2V9.5L9.5 14.5" fill="none" stroke="#2a2a2a" stroke-width="1.05"/><path d="M2.5 16.5H9" stroke="#0000f0" stroke-width="1.4"/><path d="M4 15V18M7.5 15V18" stroke="#0000f0" stroke-width="1.2"/></svg><div class="t" style="left:28px;top:489.07px;font-size:11.5px;color:#000;">Distance (75)</div><svg class="s" style="left:10px;top:485px;" width="18" height="18" viewBox="0 0 18 18"><path d="M1.5 7L6.5 2V9.5L1.5 14.5Z" fill="#e6e6e6"/><path d="M1.5 17.5V7L6.5 2V9.5L1.5 14.5" fill="none" stroke="#2a2a2a" stroke-width="1.05"/><path d="M9.5 7L14.5 2V9.5L9.5 14.5Z" fill="#e6e6e6"/><path d="M9.5 17.5V7L14.5 2V9.5L9.5 14.5" fill="none" stroke="#2a2a2a" stroke-width="1.05"/><path d="M2.5 16.5H9" stroke="#0000f0" stroke-width="1.4"/><path d="M4 15V18M7.5 15V18" stroke="#0000f0" stroke-width="1.2"/></svg><div class="t" style="left:28px;top:508.07px;font-size:11.5px;color:#000;">Angle (28)</div><svg class="s" style="left:10px;top:505px;" width="16" height="13" viewBox="0 0 16 13"><path d="M1.5 6.5L7 1.5L9.5 5.5H15.5L11.5 10.5H4.5Z" fill="#e6e6e6" stroke="#2a2a2a" stroke-width="1.05"/><path d="M9.5 5.5L4.5 10.5" stroke="#2a2a2a" stroke-dasharray="1 1"/><path d="M8 1.5Q11.5 0.5 12 5" fill="none" stroke="#0000f0" stroke-width="1.2"/></svg><div class="t" style="left:28px;top:527.07px;font-size:11.5px;color:#000;">Radius (30)</div><svg class="s" style="left:10px;top:524px;" width="16" height="15" viewBox="0 0 16 15"><circle cx="7.5" cy="7.5" r="5.8" fill="none" stroke="#000" stroke-width="1.1"/><path d="M6 7.5H14.5" stroke="#0000f0" stroke-width="1.4"/><path d="M7.5 6V9M13 6V9" stroke="#0000f0" stroke-width="1.2"/></svg><div class="t" style="left:28px;top:546.07px;font-size:11.5px;color:#000;">Parallel</div><svg class="s" style="left:10px;top:542px;" width="18" height="18" viewBox="0 0 18 18"><path d="M1.5 7L6.5 2V9.5L1.5 14.5Z" fill="#e6e6e6"/><path d="M1.5 17.5V7L6.5 2V9.5L1.5 14.5" fill="none" stroke="#2a2a2a" stroke-width="1.05"/><path d="M9.5 7L14.5 2V9.5L9.5 14.5Z" fill="#e6e6e6"/><path d="M9.5 17.5V7L14.5 2V9.5L9.5 14.5" fill="none" stroke="#2a2a2a" stroke-width="1.05"/><path d="M6.5 2H14.5M1.5 17H9.5" stroke="#0000f0" stroke-width="1" stroke-dasharray="1 1"/></svg><div class="t" style="left:28px;top:565.07px;font-size:11.5px;color:#000;">Parallel</div><svg class="s" style="left:10px;top:561px;" width="18" height="18" viewBox="0 0 18 18"><path d="M1.5 7L6.5 2V9.5L1.5 14.5Z" fill="#e6e6e6"/><path d="M1.5 17.5V7L6.5 2V9.5L1.5 14.5" fill="none" stroke="#2a2a2a" stroke-width="1.05"/><path d="M9.5 7L14.5 2V9.5L9.5 14.5Z" fill="#e6e6e6"/><path d="M9.5 17.5V7L14.5 2V9.5L9.5 14.5" fill="none" stroke="#2a2a2a" stroke-width="1.05"/><path d="M6.5 2H14.5M1.5 17H9.5" stroke="#0000f0" stroke-width="1" stroke-dasharray="1 1"/></svg><div class="t" style="left:28px;top:584.07px;font-size:11.5px;color:#000;">Coincident</div><svg class="s" style="left:13px;top:582px;" width="12" height="14" viewBox="0 0 12 14"><path d="M1.5 5.5L5.5 1.5V9L1.5 12.5Z M5.5 5.5L9.5 1.5V9L5.5 12.5Z" fill="#ececec"/><path d="M1.5 13V5.5L5.5 1.5V9L1.5 12.5M5.5 5.5L9.5 1.5V9L5.5 12.5" fill="none" stroke="#2a2a2a" stroke-width="1.05"/><path d="M5.5 0.5V13" stroke="#0000f0" stroke-width="1.5"/></svg><div class="t" style="left:28px;top:603.07px;font-size:11.5px;color:#000;">Coincident</div><svg class="s" style="left:13px;top:601px;" width="12" height="14" viewBox="0 0 12 14"><path d="M1.5 5.5L5.5 1.5V9L1.5 12.5Z M5.5 5.5L9.5 1.5V9L5.5 12.5Z" fill="#ececec"/><path d="M1.5 13V5.5L5.5 1.5V9L1.5 12.5M5.5 5.5L9.5 1.5V9L5.5 12.5" fill="none" stroke="#2a2a2a" stroke-width="1.05"/><path d="M5.5 0.5V13" stroke="#0000f0" stroke-width="1.5"/></svg><div class="t" style="left:28px;top:622.07px;font-size:11.5px;color:#000;">Coincident</div><svg class="s" style="left:13px;top:620px;" width="12" height="14" viewBox="0 0 12 14"><path d="M1.5 5.5L5.5 1.5V9L1.5 12.5Z M5.5 5.5L9.5 1.5V9L5.5 12.5Z" fill="#ececec"/><path d="M1.5 13V5.5L5.5 1.5V9L1.5 12.5M5.5 5.5L9.5 1.5V9L5.5 12.5" fill="none" stroke="#2a2a2a" stroke-width="1.05"/><path d="M5.5 0.5V13" stroke="#0000f0" stroke-width="1.5"/></svg><div class="t" style="left:28px;top:641.07px;font-size:11.5px;color:#000;">Coincident</div><svg class="s" style="left:13px;top:639px;" width="12" height="14" viewBox="0 0 12 14"><path d="M1.5 5.5L5.5 1.5V9L1.5 12.5Z M5.5 5.5L9.5 1.5V9L5.5 12.5Z" fill="#ececec"/><path d="M1.5 13V5.5L5.5 1.5V9L1.5 12.5M5.5 5.5L9.5 1.5V9L5.5 12.5" fill="none" stroke="#2a2a2a" stroke-width="1.05"/><path d="M5.5 0.5V13" stroke="#0000f0" stroke-width="1.5"/></svg><div class="t" style="left:28px;top:660.07px;font-size:11.5px;color:#000;">Coincident</div><svg class="s" style="left:13px;top:658px;" width="12" height="14" viewBox="0 0 12 14"><path d="M1.5 5.5L5.5 1.5V9L1.5 12.5Z M5.5 5.5L9.5 1.5V9L5.5 12.5Z" fill="#ececec"/><path d="M1.5 13V5.5L5.5 1.5V9L1.5 12.5M5.5 5.5L9.5 1.5V9L5.5 12.5" fill="none" stroke="#2a2a2a" stroke-width="1.05"/><path d="M5.5 0.5V13" stroke="#0000f0" stroke-width="1.5"/></svg><div class="t" style="left:28px;top:679.07px;font-size:11.5px;color:#000;">Coincident</div><svg class="s" style="left:13px;top:677px;" width="12" height="14" viewBox="0 0 12 14"><path d="M1.5 5.5L5.5 1.5V9L1.5 12.5Z M5.5 5.5L9.5 1.5V9L5.5 12.5Z" fill="#ececec"/><path d="M1.5 13V5.5L5.5 1.5V9L1.5 12.5M5.5 5.5L9.5 1.5V9L5.5 12.5" fill="none" stroke="#2a2a2a" stroke-width="1.05"/><path d="M5.5 0.5V13" stroke="#0000f0" stroke-width="1.5"/></svg><div class="t" style="left:28px;top:698.07px;font-size:11.5px;color:#000;">Coincident</div><svg class="s" style="left:13px;top:696px;" width="12" height="14" viewBox="0 0 12 14"><path d="M1.5 5.5L5.5 1.5V9L1.5 12.5Z M5.5 5.5L9.5 1.5V9L5.5 12.5Z" fill="#ececec"/><path d="M1.5 13V5.5L5.5 1.5V9L1.5 12.5M5.5 5.5L9.5 1.5V9L5.5 12.5" fill="none" stroke="#2a2a2a" stroke-width="1.05"/><path d="M5.5 0.5V13" stroke="#0000f0" stroke-width="1.5"/></svg><div class="t" style="left:28px;top:717.07px;font-size:11.5px;color:#000;">Coincident</div><svg class="s" style="left:13px;top:715px;" width="12" height="14" viewBox="0 0 12 14"><path d="M1.5 5.5L5.5 1.5V9L1.5 12.5Z M5.5 5.5L9.5 1.5V9L5.5 12.5Z" fill="#ececec"/><path d="M1.5 13V5.5L5.5 1.5V9L1.5 12.5M5.5 5.5L9.5 1.5V9L5.5 12.5" fill="none" stroke="#2a2a2a" stroke-width="1.05"/><path d="M5.5 0.5V13" stroke="#0000f0" stroke-width="1.5"/></svg><div class="t" style="left:28px;top:736.07px;font-size:11.5px;color:#000;">Coincident</div><svg class="s" style="left:13px;top:734px;" width="12" height="14" viewBox="0 0 12 14"><path d="M1.5 5.5L5.5 1.5V9L1.5 12.5Z M5.5 5.5L9.5 1.5V9L5.5 12.5Z" fill="#ececec"/><path d="M1.5 13V5.5L5.5 1.5V9L1.5 12.5M5.5 5.5L9.5 1.5V9L5.5 12.5" fill="none" stroke="#2a2a2a" stroke-width="1.05"/><path d="M5.5 0.5V13" stroke="#0000f0" stroke-width="1.5"/></svg><div class="t" style="left:28px;top:755.07px;font-size:11.5px;color:#000;">Coincident</div><svg class="s" style="left:13px;top:753px;" width="12" height="14" viewBox="0 0 12 14"><path d="M1.5 5.5L5.5 1.5V9L1.5 12.5Z M5.5 5.5L9.5 1.5V9L5.5 12.5Z" fill="#ececec"/><path d="M1.5 13V5.5L5.5 1.5V9L1.5 12.5M5.5 5.5L9.5 1.5V9L5.5 12.5" fill="none" stroke="#2a2a2a" stroke-width="1.05"/><path d="M5.5 0.5V13" stroke="#0000f0" stroke-width="1.5"/></svg><div class="t" style="left:28px;top:774.07px;font-size:11.5px;color:#000;">Coincident</div><svg class="s" style="left:13px;top:772px;" width="12" height="14" viewBox="0 0 12 14"><path d="M1.5 5.5L5.5 1.5V9L1.5 12.5Z M5.5 5.5L9.5 1.5V9L5.5 12.5Z" fill="#ececec"/><path d="M1.5 13V5.5L5.5 1.5V9L1.5 12.5M5.5 5.5L9.5 1.5V9L5.5 12.5" fill="none" stroke="#2a2a2a" stroke-width="1.05"/><path d="M5.5 0.5V13" stroke="#0000f0" stroke-width="1.5"/></svg><div class="t" style="left:28px;top:793.07px;font-size:11.5px;color:#000;">Coincident</div><svg class="s" style="left:13px;top:791px;" width="12" height="14" viewBox="0 0 12 14"><path d="M1.5 5.5L5.5 1.5V9L1.5 12.5Z M5.5 5.5L9.5 1.5V9L5.5 12.5Z" fill="#ececec"/><path d="M1.5 13V5.5L5.5 1.5V9L1.5 12.5M5.5 5.5L9.5 1.5V9L5.5 12.5" fill="none" stroke="#2a2a2a" stroke-width="1.05"/><path d="M5.5 0.5V13" stroke="#0000f0" stroke-width="1.5"/></svg><div class="t" style="left:28px;top:812.07px;font-size:11.5px;color:#000;">Coincident</div><svg class="s" style="left:13px;top:810px;" width="12" height="14" viewBox="0 0 12 14"><path d="M1.5 5.5L5.5 1.5V9L1.5 12.5Z M5.5 5.5L9.5 1.5V9L5.5 12.5Z" fill="#ececec"/><path d="M1.5 13V5.5L5.5 1.5V9L1.5 12.5M5.5 5.5L9.5 1.5V9L5.5 12.5" fill="none" stroke="#2a2a2a" stroke-width="1.05"/><path d="M5.5 0.5V13" stroke="#0000f0" stroke-width="1.5"/></svg><div class="t" style="left:28px;top:831.07px;font-size:11.5px;color:#000;">Coincident</div><svg class="s" style="left:13px;top:829px;" width="12" height="14" viewBox="0 0 12 14"><path d="M1.5 5.5L5.5 1.5V9L1.5 12.5Z M5.5 5.5L9.5 1.5V9L5.5 12.5Z" fill="#ececec"/><path d="M1.5 13V5.5L5.5 1.5V9L1.5 12.5M5.5 5.5L9.5 1.5V9L5.5 12.5" fill="none" stroke="#2a2a2a" stroke-width="1.05"/><path d="M5.5 0.5V13" stroke="#0000f0" stroke-width="1.5"/></svg><div class="t" style="left:28px;top:850.07px;font-size:11.5px;color:#000;">Coincident</div><svg class="s" style="left:13px;top:848px;" width="12" height="14" viewBox="0 0 12 14"><path d="M1.5 5.5L5.5 1.5V9L1.5 12.5Z M5.5 5.5L9.5 1.5V9L5.5 12.5Z" fill="#ececec"/><path d="M1.5 13V5.5L5.5 1.5V9L1.5 12.5M5.5 5.5L9.5 1.5V9L5.5 12.5" fill="none" stroke="#2a2a2a" stroke-width="1.05"/><path d="M5.5 0.5V13" stroke="#0000f0" stroke-width="1.5"/></svg><div class="t" style="left:28px;top:869.07px;font-size:11.5px;color:#000;">Tangent</div><svg class="s" style="left:10px;top:865px;" width="16" height="18" viewBox="0 0 16 18"><defs><linearGradient id="cg21" x1="0" y1="0" x2="1" y2="1"><stop offset="0" stop-color="#fff"/><stop offset="1" stop-color="#888"/></linearGradient></defs><path d="M2 8L8 2L10 4H13L15 6V8L8 14Z" fill="url(#cg21)" stroke="#2a2a2a" stroke-width="0.9" stroke-dasharray="1.2 0.8"/><circle cx="5.5" cy="11.5" r="2.8" fill="#ddd" stroke="#0000f0" stroke-width="1.4"/><path d="M1.5 7.5V17" stroke="#0000f0" stroke-width="1.6"/></svg><div class="t" style="left:28px;top:888.07px;font-size:11.5px;color:#000;">Tangent</div><svg class="s" style="left:10px;top:884px;" width="16" height="18" viewBox="0 0 16 18"><defs><linearGradient id="cg22" x1="0" y1="0" x2="1" y2="1"><stop offset="0" stop-color="#fff"/><stop offset="1" stop-color="#888"/></linearGradient></defs><path d="M2 8L8 2L10 4H13L15 6V8L8 14Z" fill="url(#cg22)" stroke="#2a2a2a" stroke-width="0.9" stroke-dasharray="1.2 0.8"/><circle cx="5.5" cy="11.5" r="2.8" fill="#ddd" stroke="#0000f0" stroke-width="1.4"/><path d="M1.5 7.5V17" stroke="#0000f0" stroke-width="1.6"/></svg><div class="r" style="left:5px;top:911px;width:88px;height:20px;background:#f9f9f9"></div><svg class="s" style="left:14px;top:914px;" width="20" height="14" viewBox="0 0 20 14"><path d="M1 13L6 7H19L14 13Z" fill="none" stroke="#000"/><path d="M9 11V2" stroke="#e00000" stroke-width="1.2"/><polygon points="9,1 6,5 12,5" fill="#e00000"/></svg><div class="t" style="left:35px;top:916.18px;font-size:11.6px;color:#000;">Sketch 2D</div><div class="r" style="left:206px;top:149px;width:1px;height:782px;background:#6e6e6e"></div><div class="r" style="left:206px;top:930px;width:1248px;height:1px;background:#6e6e6e"></div><svg style="position:absolute;left:0;top:0" width="1454" height="960" viewBox="0 0 1454 960"><path d="M294 431.0 A41.5 41.5 0 0 1 335.5 389.5 H576.0 A41.5 41.5 0 0 1 617.5 431.0 V746.0 A41.5 41.5 0 0 1 576.0 787.5 H335.5 A41.5 41.5 0 0 1 294 746.0 V661 H414.5 V667 A20 20 0 0 0 434.5 687 H478 A20 20 0 0 0 498 667 V510 A20 20 0 0 0 478 490 H434.5 A20 20 0 0 0 414.5 510 V516.5 H294 Z" fill="#3e3c3a"/><clipPath id="ctop"><rect x="330" y="380" width="250" height="14"/></clipPath><path d="M294 431.0 A41.5 41.5 0 0 1 335.5 389.5 H576.0 A41.5 41.5 0 0 1 617.5 431.0 V746.0 A41.5 41.5 0 0 1 576.0 787.5 H335.5 A41.5 41.5 0 0 1 294 746.0 V661 H414.5 V667 A20 20 0 0 0 434.5 687 H478 A20 20 0 0 0 498 667 V510 A20 20 0 0 0 478 490 H434.5 A20 20 0 0 0 414.5 510 V516.5 H294 Z" fill="#77736f" clip-path="url(#ctop)"/><clipPath id="cright"><rect x="560" y="380" width="70" height="420"/></clipPath><path d="M294 431.0 A41.5 41.5 0 0 1 335.5 389.5 H576.0 A41.5 41.5 0 0 1 617.5 431.0 V746.0 A41.5 41.5 0 0 1 576.0 787.5 H335.5 A41.5 41.5 0 0 1 294 746.0 V661 H414.5 V667 A20 20 0 0 0 434.5 687 H478 A20 20 0 0 0 498 667 V510 A20 20 0 0 0 478 490 H434.5 A20 20 0 0 0 414.5 510 V516.5 H294 Z" fill="#86827e" clip-path="url(#cright)"/><clipPath id="cbot"><rect x="300" y="770" width="280" height="30"/></clipPath><path d="M294 431.0 A41.5 41.5 0 0 1 335.5 389.5 H576.0 A41.5 41.5 0 0 1 617.5 431.0 V746.0 A41.5 41.5 0 0 1 576.0 787.5 H335.5 A41.5 41.5 0 0 1 294 746.0 V661 H414.5 V667 A20 20 0 0 0 434.5 687 H478 A20 20 0 0 0 498 667 V510 A20 20 0 0 0 478 490 H434.5 A20 20 0 0 0 414.5 510 V516.5 H294 Z" fill="#3a3836" clip-path="url(#cbot)"/><path d="M299.5 430.5 A36 36 0 0 1 335.5 394.5 H576.5 A36 36 0 0 1 612.5 430.5 V746.5 A36 36 0 0 1 576.5 782.5 H335.5 A36 36 0 0 1 299.5 746.5 V661 H414.5 V667 A20 20 0 0 0 434.5 687 H478 A20 20 0 0 0 498 667 V510 A20 20 0 0 0 478 490 H434.5 A20 20 0 0 0 414.5 510 V516.5 H299.5 Z" fill="#b6b1ad" stroke="#111" stroke-width="1"/><path d="M294 431L299.5 431" stroke="#222" stroke-width="1"/><path d="M335.5 389.5L335.5 394.5" stroke="#222" stroke-width="1"/><path d="M576 389.5L576 394.5" stroke="#222" stroke-width="1"/><path d="M612.5 431L617.5 431" stroke="#222" stroke-width="1"/><path d="M612.5 746L617.5 746" stroke="#222" stroke-width="1"/><path d="M576 782.5L576 787.5" stroke="#222" stroke-width="1"/><path d="M335.5 782.5L335.5 787.5" stroke="#222" stroke-width="1"/><path d="M294 746L299.5 746" stroke="#222" stroke-width="1"/><path d="M294 431.0 A41.5 41.5 0 0 1 335.5 389.5 H576.0 A41.5 41.5 0 0 1 617.5 431.0 V746.0 A41.5 41.5 0 0 1 576.0 787.5 H335.5 A41.5 41.5 0 0 1 294 746.0 V661 H414.5 V667 A20 20 0 0 0 434.5 687 H478 A20 20 0 0 0 498 667 V510 A20 20 0 0 0 478 490 H434.5 A20 20 0 0 0 414.5 510 V516.5 H294 Z" fill="none" stroke="#222" stroke-width="0.8"/><path d="M617.5 524 H571 A62 62 0 0 1 516.26 491.11 L462.5 390 H617.5 V524" fill="none" stroke="#000" stroke-width="2"/><path d="M516.26 491.11 L533.75 524 H571" fill="none" stroke="#222" stroke-width="1" stroke-dasharray="5 4"/><path d="M462.5 319.5V389M617.5 319.5V389M462.5 327H617.5" stroke="#14e614" stroke-width="1.2"/><path d="M463 327L478 324.5V329.5Z M617 327L602 324.5V329.5Z" fill="none" stroke="#14e614" stroke-width="1"/><text x="540.5" y="320" font-size="20.5" fill="#14e614" text-anchor="middle" font-family="Liberation Sans" textLength="21.5" lengthAdjust="spacingAndGlyphs">75</text><path d="M619 390H707M619 524H707M700 390V524" stroke="#1434f5" stroke-width="1.2"/><path d="M700 391L697.5 405H702.5Z M700 523L697.5 509H702.5Z" fill="none" stroke="#1434f5" stroke-width="1"/><text transform="translate(692,458) rotate(-90)" x="0" y="0" font-size="20.5" fill="#1434f5" text-anchor="middle" font-family="Liberation Sans" textLength="21.5" lengthAdjust="spacingAndGlyphs">65</text><path d="M510.51 478.53 A229 229 0 0 1 617 452" fill="none" stroke="#1434f5" stroke-width="1.2"/><path d="M510.51 478.53L524.06 474.20L521.72 469.78Z" fill="none" stroke="#1434f5" stroke-width="1"/><path d="M617.00 452.00L603.00 449.50L603.00 454.50Z" fill="none" stroke="#1434f5" stroke-width="1"/><text transform="translate(562,452) rotate(-13)" x="0" y="0" font-size="20" fill="#1434f5" text-anchor="middle" font-family="Liberation Sans">28°</text><path d="M545.02 518.29L519.87 572.77" stroke="#1434f5" stroke-width="1.2"/><path d="M545.02 518.29L536.88 529.96L541.42 532.05Z" fill="none" stroke="#1434f5" stroke-width="1"/><text transform="translate(517.5,559) rotate(-64)" x="0" y="0" font-size="20" fill="#1434f5" text-anchor="middle" font-family="Liberation Sans">R30</text><path d="M265 589H325M295 560V619" stroke="#2a5ae8" stroke-width="1"/><path d="M331.5 852H374" stroke="#0000ff" stroke-width="2.2"/><polygon points="373,847.5 386,852 373,856.5" fill="#0000ff"/><path d="M331.5 852V894" stroke="#ff0000" stroke-width="2.2"/><polygon points="327,893 336,893 331.5,906" fill="#ff0000"/><circle cx="331.5" cy="852" r="3" fill="#22ee22"/><text x="394.5" y="857.5" font-size="14.5" fill="#3333ff" text-anchor="middle" font-family="Liberation Sans">Z</text><text x="331.5" y="920" font-size="14.5" fill="#ff2222" text-anchor="middle" font-family="Liberation Sans">X</text></svg><div class="r" style="left:207px;top:149px;width:51px;height:109px;background:#f0f0f0;border:1px solid #a0a0a0;border-right:2px solid #707070;border-bottom:2px solid #707070"></div><div class="r" style="left:225px;top:153px;width:13px;height:13px;background:#f0f0f0;border:1px solid #b0b0b0"></div><svg class="s" style="left:228px;top:157px;" width="8" height="5" viewBox="0 0 8 5"><polygon points="0,4.5 7,4.5 3.5,0.5" fill="#222"/></svg><div class="r" style="left:240px;top:153px;width:13px;height:13px;background:#f0f0f0;border:1px solid #b0b0b0"></div><svg class="s" style="left:242px;top:155px;" width="9" height="9" viewBox="0 0 9 9"><path d="M1.5 1.5L7.5 7.5M7.5 1.5L1.5 7.5" stroke="#111" stroke-width="1.4"/></svg><svg class="s" style="left:210px;top:174px;" width="13" height="13" viewBox="0 0 13 13"><circle cx="6.5" cy="6.5" r="6" fill="#fff" stroke="#333"/><circle cx="6.5" cy="6.5" r="3" fill="#333"/></svg><svg class="s" style="left:228px;top:175px;" width="15" height="10" viewBox="0 0 15 10"><rect x="0.5" y="0.5" width="14" height="9" fill="#fff" stroke="#000"/></svg><svg class="s" style="left:210px;top:204px;" width="13" height="13" viewBox="0 0 13 13"><circle cx="6.5" cy="6.5" r="6" fill="#fff" stroke="#333"/></svg><svg class="s" style="left:228px;top:205px;" width="15" height="10" viewBox="0 0 15 10"><rect x="0.5" y="0.5" width="14" height="9" fill="#fff" stroke="#000"/><path d="M2.5 2.5L12.5 7.5M2.5 7.5L12.5 2.5" stroke="#e00" stroke-dasharray="1 1.5"/></svg><svg class="s" style="left:210px;top:234px;" width="13" height="13" viewBox="0 0 13 13"><circle cx="6.5" cy="6.5" r="6" fill="#fff" stroke="#333"/></svg><svg class="s" style="left:228px;top:235px;" width="15" height="10" viewBox="0 0 15 10"><rect x="0.5" y="0.5" width="14" height="9" fill="#fff" stroke="#000"/><path d="M2 5H13" stroke="#e00" stroke-dasharray="1 1"/><path d="M7.5 1V9" stroke="#e00"/></svg><div class="r" style="left:459px;top:154px;width:640px;height:32px;background:#f7f7f7;border:1px solid #c8c8c8"></div><div class="r" style="left:555px;top:155px;width:96px;height:30px;background:#fde3ae"></div><svg class="s" style="left:463px;top:158px;" width="24" height="24" viewBox="0 0 24 24"><path d="M14 2L21 9L18 10.5L14.5 14L14 18L5.5 9.5L9.5 9L13 5.5Z" fill="#4a4a4a"/><path d="M9 15L3 21" stroke="#4a4a4a" stroke-width="1.6"/></svg><svg class="s" style="left:495px;top:158px;" width="24" height="24" viewBox="0 0 24 24"><path d="M2 3H18" stroke="#7ee860" stroke-width="2"/><path d="M20 6V22" stroke="#7ee860" stroke-width="2"/><path d="M7.5 10Q7.5 18 15 18" fill="none" stroke="#555" stroke-width="1.2"/><path d="M5 12L7.5 9L10 12M13 15.5L16 18L13 20.5" fill="none" stroke="#555" stroke-width="1.2"/></svg><svg class="s" style="left:527px;top:158px;" width="24" height="24" viewBox="0 0 24 24"><rect x="0.5" y="6.5" width="25" height="11" fill="#fdf29a" stroke="#9a7a20"/><path d="M3.0 7V9" stroke="#8a7a20" stroke-width="0.8"/><path d="M5.5 7V10" stroke="#8a7a20" stroke-width="0.8"/><path d="M8.0 7V9" stroke="#8a7a20" stroke-width="0.8"/><path d="M10.5 7V10" stroke="#8a7a20" stroke-width="0.8"/><path d="M13.0 7V9" stroke="#8a7a20" stroke-width="0.8"/><path d="M15.5 7V10" stroke="#8a7a20" stroke-width="0.8"/><path d="M18.0 7V9" stroke="#8a7a20" stroke-width="0.8"/><path d="M20.5 7V10" stroke="#8a7a20" stroke-width="0.8"/></svg><svg class="s" style="left:559px;top:158px;" width="24" height="24" viewBox="0 0 24 24"><circle cx="9" cy="5" r="2.5" fill="none" stroke="#222" stroke-width="1.1"/><circle cx="9" cy="5" r="1" fill="#222"/><path d="M14 9V20L17 17L19 21L21 20L19 16H23Z" fill="#fff" stroke="#555" stroke-width="0.9"/></svg><svg class="s" style="left:591px;top:158px;" width="24" height="24" viewBox="0 0 24 24"><path d="M5 12.5L13 4.5" stroke="#222" stroke-width="2.6"/><path d="M5 12.5L13 4.5" stroke="#fff" stroke-width="1"/><path d="M14 9V20L17 17L19 21L21 20L19 16H23Z" fill="#fff" stroke="#555" stroke-width="0.9"/></svg><svg class="s" style="left:623px;top:158px;" width="24" height="24" viewBox="0 0 24 24"><path d="M4.5 8.5L8 4.5H16.5L13 8.5Z" fill="#fff" stroke="#222"/><path d="M14 9V20L17 17L19 21L21 20L19 16H23Z" fill="#fff" stroke="#555" stroke-width="0.9"/></svg><svg class="s" style="left:655px;top:158px;" width="24" height="24" viewBox="0 0 24 24"><rect x="2.5" y="6.5" width="15" height="15" fill="#8ef04a"/><rect x="6.5" y="2.5" width="15" height="15" fill="none" stroke="#9a9a9a"/><rect x="2.5" y="6.5" width="15" height="15" fill="none" stroke="#9a9a9a"/><path d="M2.5 6.5L6.5 2.5M17.5 6.5L21.5 2.5M17.5 21.5L21.5 17.5M2.5 21.5L6.5 17.5" stroke="#9a9a9a"/></svg><svg class="s" style="left:687px;top:158px;" width="24" height="24" viewBox="0 0 24 24"><path d="M3 6.5L7 2.5H21.5L17.5 6.5Z" fill="#8ef04a"/><rect x="6.5" y="2.5" width="15" height="15" fill="none" stroke="#9a9a9a"/><rect x="2.5" y="6.5" width="15" height="15" fill="none" stroke="#9a9a9a"/><path d="M2.5 6.5L6.5 2.5M17.5 6.5L21.5 2.5M17.5 21.5L21.5 17.5M2.5 21.5L6.5 17.5" stroke="#9a9a9a"/></svg><svg class="s" style="left:719px;top:158px;" width="24" height="24" viewBox="0 0 24 24"><path d="M2.5 6.5H6.5V17.5L2.5 21.5Z" fill="#8ef04a"/><rect x="6.5" y="2.5" width="15" height="15" fill="none" stroke="#9a9a9a"/><rect x="2.5" y="6.5" width="15" height="15" fill="none" stroke="#9a9a9a"/><path d="M2.5 6.5L6.5 2.5M17.5 6.5L21.5 2.5M17.5 21.5L21.5 17.5M2.5 21.5L6.5 17.5" stroke="#9a9a9a"/></svg><svg class="s" style="left:751px;top:158px;" width="24" height="24" viewBox="0 0 24 24"><path d="M17.5 6.5L21.5 2.5V17.5L17.5 21.5Z" fill="#8ef04a"/><rect x="6.5" y="2.5" width="15" height="15" fill="none" stroke="#9a9a9a"/><rect x="2.5" y="6.5" width="15" height="15" fill="none" stroke="#9a9a9a"/><path d="M2.5 6.5L6.5 2.5M17.5 6.5L21.5 2.5M17.5 21.5L21.5 17.5M2.5 21.5L6.5 17.5" stroke="#9a9a9a"/></svg><svg class="s" style="left:783px;top:158px;" width="24" height="24" viewBox="0 0 24 24"><path d="M3 7L12 3L21 7V18L12 22L3 18Z" fill="#e8f8e0" stroke="#aaa"/><path d="M3 7L12 11L21 7M12 11V22" fill="none" stroke="#aaa"/><path d="M12 11L21 7V18L12 22Z" fill="#c8ecc0"/></svg><svg class="s" style="left:815px;top:158px;" width="24" height="24" viewBox="0 0 24 24"><rect x="2.5" y="6.5" width="15" height="15" fill="#8ef04a"/><rect x="6.5" y="2.5" width="15" height="15" fill="none" stroke="#9a9a9a"/><rect x="2.5" y="6.5" width="15" height="15" fill="none" stroke="#9a9a9a"/><path d="M2.5 6.5L6.5 2.5M17.5 6.5L21.5 2.5M17.5 21.5L21.5 17.5M2.5 21.5L6.5 17.5" stroke="#9a9a9a"/><path d="M9 9V20L12 17L14 21L16 20L14 16H18Z" fill="#fff" stroke="#555" stroke-width="0.9"/></svg><svg class="s" style="left:847px;top:158px;" width="24" height="24" viewBox="0 0 24 24"><polygon points="3,0.5 10,0.5 6.5,4" fill="#888"/><rect x="2.5" y="5.5" width="19" height="16" fill="#fff" stroke="#aaa"/><path d="M4.5 8.5H19.5M4.5 10.5H19.5M4.5 12.5H19.5M4.5 14.5H19.5M4.5 16.5H19.5M4.5 18.5H19.5" stroke="#8a8a8a"/></svg><svg class="s" style="left:879px;top:158px;" width="24" height="24" viewBox="0 0 24 24"><path d="M3.5 7.5L7.5 3.5H12.5L9.5 6.5V14.5H20.5L22.5 12.5V18.5L19.5 21.5H3.5Z" fill="#a8dcf4"/><path d="M3.5 7.5L7.5 3.5H12.5V11.5" fill="#e8f6fc" stroke="#2a6a90"/><path d="M3.5 7.5H9.5V14.5H19.5L22.5 12.5V18.5L19.5 21.5H3.5Z" fill="none" stroke="#2a6a90" stroke-width="1.2"/><path d="M9.5 7.5L12.5 4.5M9.5 14.5L12.5 11.5H22.5M9.5 17.5H19.5V21.5" fill="none" stroke="#2a6a90"/><path d="M12.5 4V11.5" stroke="#2a6a90" stroke-width="1.2"/></svg><svg class="s" style="left:911px;top:158px;" width="24" height="24" viewBox="0 0 24 24"><path d="M2.5 6.5L5.5 3.5H23.5V12M2.5 6.5H20.5V12M20.5 6.5L23.5 3.5M2.5 6.5V12" fill="none" stroke="#b0b0b0"/><path d="M2.5 12.5L5.5 9.5H23.5V18.5L20.5 21.5H2.5Z" fill="#fde030"/><path d="M2.5 12.5H20.5V21.5H2.5Z M20.5 12.5L23.5 9.5V18.5L20.5 21.5" fill="none" stroke="#c09800"/></svg><svg class="s" style="left:943px;top:158px;" width="24" height="24" viewBox="0 0 24 24"><path d="M7 2L18 11M18 2L7 11" stroke="#a0a0a0" stroke-width="2.8"/><path d="M2.5 15.5L5.5 12.5H23.5V20.5L20.5 23.5H2.5Z" fill="#fff" stroke="#aaa"/><path d="M2.5 15.5H20.5V23.5M20.5 15.5L23.5 12.5" fill="none" stroke="#aaa"/></svg><svg class="s" style="left:975px;top:158px;" width="24" height="24" viewBox="0 0 24 24"><rect x="4.5" y="4.5" width="15" height="15" fill="none" stroke="#999" stroke-dasharray="1 1"/><path d="M12 4V20M4 12H20" stroke="#555"/></svg><svg class="s" style="left:1007px;top:158px;" width="24" height="24" viewBox="0 0 24 24"><path d="M4 2V9" stroke="#1a1a90" stroke-width="1.5"/><polygon points="1,8 7,8 4,12" fill="#1a1a90"/><path d="M9.5 8.5L12 6H21V19L18.5 21.5H9.5Z" fill="#e0e0e0" stroke="#222" stroke-width="1.2"/></svg><svg class="s" style="left:1039px;top:158px;" width="24" height="24" viewBox="0 0 24 24"><text x="4" y="10" font-size="10" font-weight="bold" fill="#2a2a9a" text-anchor="middle" font-family="Liberation Sans">A</text><path d="M9.5 8.5L12 6H21V19L18.5 21.5H9.5Z" fill="#e0e0e0" stroke="#222" stroke-width="1.2"/></svg><svg class="s" style="left:1071px;top:158px;" width="24" height="24" viewBox="0 0 24 24"><rect x="2.5" y="9.5" width="15" height="11" fill="none" stroke="#5aa0d8" stroke-width="1.2"/><path d="M9 13L17 5M13 4H21V12" fill="none" stroke="#3a88d0" stroke-width="1.6"/></svg><div class="r" style="left:1417px;top:237px;width:32px;height:640px;background:#f7f7f7;border:1px solid #c8c8c8"></div><div class="r" style="left:1418px;top:333px;width:30px;height:96px;background:#fde3ae"></div><svg class="s" style="left:1421px;top:241px;" width="24" height="24" viewBox="0 0 24 24"><path d="M14 2L21 9L18 10.5L14.5 14L14 18L5.5 9.5L9.5 9L13 5.5Z" fill="#4a4a4a"/><path d="M9 15L3 21" stroke="#4a4a4a" stroke-width="1.6"/></svg><svg class="s" style="left:1421px;top:273px;" width="24" height="24" viewBox="0 0 24 24"><path d="M2 3H18" stroke="#7ee860" stroke-width="2"/><path d="M20 6V22" stroke="#7ee860" stroke-width="2"/><path d="M7.5 10Q7.5 18 15 18" fill="none" stroke="#555" stroke-width="1.2"/><path d="M5 12L7.5 9L10 12M13 15.5L16 18L13 20.5" fill="none" stroke="#555" stroke-width="1.2"/></svg><svg class="s" style="left:1421px;top:305px;" width="24" height="24" viewBox="0 0 24 24"><rect x="0.5" y="6.5" width="25" height="11" fill="#fdf29a" stroke="#9a7a20"/><path d="M3.0 7V9" stroke="#8a7a20" stroke-width="0.8"/><path d="M5.5 7V10" stroke="#8a7a20" stroke-width="0.8"/><path d="M8.0 7V9" stroke="#8a7a20" stroke-width="0.8"/><path d="M10.5 7V10" stroke="#8a7a20" stroke-width="0.8"/><path d="M13.0 7V9" stroke="#8a7a20" stroke-width="0.8"/><path d="M15.5 7V10" stroke="#8a7a20" stroke-width="0.8"/><path d="M18.0 7V9" stroke="#8a7a20" stroke-width="0.8"/><path d="M20.5 7V10" stroke="#8a7a20" stroke-width="0.8"/></svg><svg class="s" style="left:1421px;top:337px;" width="24" height="24" viewBox="0 0 24 24"><circle cx="9" cy="5" r="2.5" fill="none" stroke="#222" stroke-width="1.1"/><circle cx="9" cy="5" r="1" fill="#222"/><path d="M14 9V20L17 17L19 21L21 20L19 16H23Z" fill="#fff" stroke="#555" stroke-width="0.9"/></svg><svg class="s" style="left:1421px;top:369px;" width="24" height="24" viewBox="0 0 24 24"><path d="M5 12.5L13 4.5" stroke="#222" stroke-width="2.6"/><path d="M5 12.5L13 4.5" stroke="#fff" stroke-width="1"/><path d="M14 9V20L17 17L19 21L21 20L19 16H23Z" fill="#fff" stroke="#555" stroke-width="0.9"/></svg><svg class="s" style="left:1421px;top:401px;" width="24" height="24" viewBox="0 0 24 24"><path d="M4.5 8.5L8 4.5H16.5L13 8.5Z" fill="#fff" stroke="#222"/><path d="M14 9V20L17 17L19 21L21 20L19 16H23Z" fill="#fff" stroke="#555" stroke-width="0.9"/></svg><svg class="s" style="left:1421px;top:433px;" width="24" height="24" viewBox="0 0 24 24"><rect x="2.5" y="6.5" width="15" height="15" fill="#8ef04a"/><rect x="6.5" y="2.5" width="15" height="15" fill="none" stroke="#9a9a9a"/><rect x="2.5" y="6.5" width="15" height="15" fill="none" stroke="#9a9a9a"/><path d="M2.5 6.5L6.5 2.5M17.5 6.5L21.5 2.5M17.5 21.5L21.5 17.5M2.5 21.5L6.5 17.5" stroke="#9a9a9a"/></svg><svg class="s" style="left:1421px;top:465px;" width="24" height="24" viewBox="0 0 24 24"><path d="M3 6.5L7 2.5H21.5L17.5 6.5Z" fill="#8ef04a"/><rect x="6.5" y="2.5" width="15" height="15" fill="none" stroke="#9a9a9a"/><rect x="2.5" y="6.5" width="15" height="15" fill="none" stroke="#9a9a9a"/><path d="M2.5 6.5L6.5 2.5M17.5 6.5L21.5 2.5M17.5 21.5L21.5 17.5M2.5 21.5L6.5 17.5" stroke="#9a9a9a"/></svg><svg class="s" style="left:1421px;top:497px;" width="24" height="24" viewBox="0 0 24 24"><path d="M2.5 6.5H6.5V17.5L2.5 21.5Z" fill="#8ef04a"/><rect x="6.5" y="2.5" width="15" height="15" fill="none" stroke="#9a9a9a"/><rect x="2.5" y="6.5" width="15" height="15" fill="none" stroke="#9a9a9a"/><path d="M2.5 6.5L6.5 2.5M17.5 6.5L21.5 2.5M17.5 21.5L21.5 17.5M2.5 21.5L6.5 17.5" stroke="#9a9a9a"/></svg><svg class="s" style="left:1421px;top:529px;" width="24" height="24" viewBox="0 0 24 24"><path d="M17.5 6.5L21.5 2.5V17.5L17.5 21.5Z" fill="#8ef04a"/><rect x="6.5" y="2.5" width="15" height="15" fill="none" stroke="#9a9a9a"/><rect x="2.5" y="6.5" width="15" height="15" fill="none" stroke="#9a9a9a"/><path d="M2.5 6.5L6.5 2.5M17.5 6.5L21.5 2.5M17.5 21.5L21.5 17.5M2.5 21.5L6.5 17.5" stroke="#9a9a9a"/></svg><svg class="s" style="left:1421px;top:561px;" width="24" height="24" viewBox="0 0 24 24"><path d="M3 7L12 3L21 7V18L12 22L3 18Z" fill="#e8f8e0" stroke="#aaa"/><path d="M3 7L12 11L21 7M12 11V22" fill="none" stroke="#aaa"/><path d="M12 11L21 7V18L12 22Z" fill="#c8ecc0"/></svg><svg class="s" style="left:1421px;top:593px;" width="24" height="24" viewBox="0 0 24 24"><rect x="2.5" y="6.5" width="15" height="15" fill="#8ef04a"/><rect x="6.5" y="2.5" width="15" height="15" fill="none" stroke="#9a9a9a"/><rect x="2.5" y="6.5" width="15" height="15" fill="none" stroke="#9a9a9a"/><path d="M2.5 6.5L6.5 2.5M17.5 6.5L21.5 2.5M17.5 21.5L21.5 17.5M2.5 21.5L6.5 17.5" stroke="#9a9a9a"/><path d="M9 9V20L12 17L14 21L16 20L14 16H18Z" fill="#fff" stroke="#555" stroke-width="0.9"/></svg><svg class="s" style="left:1421px;top:625px;" width="24" height="24" viewBox="0 0 24 24"><polygon points="3,0.5 10,0.5 6.5,4" fill="#888"/><rect x="2.5" y="5.5" width="19" height="16" fill="#fff" stroke="#aaa"/><path d="M4.5 8.5H19.5M4.5 10.5H19.5M4.5 12.5H19.5M4.5 14.5H19.5M4.5 16.5H19.5M4.5 18.5H19.5" stroke="#8a8a8a"/></svg><svg class="s" style="left:1421px;top:657px;" width="24" height="24" viewBox="0 0 24 24"><path d="M3.5 7.5L7.5 3.5H12.5L9.5 6.5V14.5H20.5L22.5 12.5V18.5L19.5 21.5H3.5Z" fill="#a8dcf4"/><path d="M3.5 7.5L7.5 3.5H12.5V11.5" fill="#e8f6fc" stroke="#2a6a90"/><path d="M3.5 7.5H9.5V14.5H19.5L22.5 12.5V18.5L19.5 21.5H3.5Z" fill="none" stroke="#2a6a90" stroke-width="1.2"/><path d="M9.5 7.5L12.5 4.5M9.5 14.5L12.5 11.5H22.5M9.5 17.5H19.5V21.5" fill="none" stroke="#2a6a90"/><path d="M12.5 4V11.5" stroke="#2a6a90" stroke-width="1.2"/></svg><svg class="s" style="left:1421px;top:689px;" width="24" height="24" viewBox="0 0 24 24"><path d="M2.5 6.5L5.5 3.5H23.5V12M2.5 6.5H20.5V12M20.5 6.5L23.5 3.5M2.5 6.5V12" fill="none" stroke="#b0b0b0"/><path d="M2.5 12.5L5.5 9.5H23.5V18.5L20.5 21.5H2.5Z" fill="#fde030"/><path d="M2.5 12.5H20.5V21.5H2.5Z M20.5 12.5L23.5 9.5V18.5L20.5 21.5" fill="none" stroke="#c09800"/></svg><svg class="s" style="left:1421px;top:721px;" width="24" height="24" viewBox="0 0 24 24"><path d="M7 2L18 11M18 2L7 11" stroke="#a0a0a0" stroke-width="2.8"/><path d="M2.5 15.5L5.5 12.5H23.5V20.5L20.5 23.5H2.5Z" fill="#fff" stroke="#aaa"/><path d="M2.5 15.5H20.5V23.5M20.5 15.5L23.5 12.5" fill="none" stroke="#aaa"/></svg><svg class="s" style="left:1421px;top:753px;" width="24" height="24" viewBox="0 0 24 24"><rect x="4.5" y="4.5" width="15" height="15" fill="none" stroke="#999" stroke-dasharray="1 1"/><path d="M12 4V20M4 12H20" stroke="#555"/></svg><svg class="s" style="left:1421px;top:785px;" width="24" height="24" viewBox="0 0 24 24"><path d="M4 2V9" stroke="#1a1a90" stroke-width="1.5"/><polygon points="1,8 7,8 4,12" fill="#1a1a90"/><path d="M9.5 8.5L12 6H21V19L18.5 21.5H9.5Z" fill="#e0e0e0" stroke="#222" stroke-width="1.2"/></svg><svg class="s" style="left:1421px;top:817px;" width="24" height="24" viewBox="0 0 24 24"><text x="4" y="10" font-size="10" font-weight="bold" fill="#2a2a9a" text-anchor="middle" font-family="Liberation Sans">A</text><path d="M9.5 8.5L12 6H21V19L18.5 21.5H9.5Z" fill="#e0e0e0" stroke="#222" stroke-width="1.2"/></svg><svg class="s" style="left:1421px;top:849px;" width="24" height="24" viewBox="0 0 24 24"><rect x="2.5" y="9.5" width="15" height="11" fill="none" stroke="#5aa0d8" stroke-width="1.2"/><path d="M9 13L17 5M13 4H21V12" fill="none" stroke="#3a88d0" stroke-width="1.6"/></svg><div class="r" style="left:1357px;top:149px;width:32px;height:21px;background:#f7f7f7;border:1px solid #cacaca;border-radius:2px"></div><div class="r" style="left:1388px;top:149px;width:32px;height:21px;background:#f7f7f7;border:1px solid #cacaca;border-radius:2px"></div><div class="r" style="left:1420px;top:149px;width:32px;height:21px;background:#f7f7f7;border:1px solid #cacaca;border-radius:2px"></div><div class="r" style="left:1368px;top:163px;width:11px;height:2px;background:#555"></div><svg class="s" style="left:1398px;top:153px;" width="14" height="14" viewBox="0 0 14 14"><path d="M4.5 1.5H12.5V9.5" fill="none" stroke="#555"/><rect x="1.5" y="4.5" width="10" height="8" fill="none" stroke="#555"/><path d="M1.5 5.5H11.5" stroke="#555" stroke-width="2"/></svg><div class="r" style="left:1427px;top:152px;width:20px;height:15px;background:#c75050"></div><svg class="s" style="left:1432px;top:155px;" width="10" height="9" viewBox="0 0 10 9"><path d="M1 0.5L9 8.5M9 0.5L1 8.5" stroke="#fff" stroke-width="1.6"/></svg><div class="r" style="left:1452px;top:149px;width:2px;height:782px;background:#6e6e6e"></div><div class="r" style="left:547px;top:273px;width:243px;height:26px;background:#f3f3f3;border:1px solid #d8d8d8;box-shadow:2px 2px 2px rgba(0,0,0,0.12)"></div><div class="r" style="left:549px;top:275px;width:95px;height:22px;background:#f8fafd;border:1px solid #a9bdd6"></div><div class="t" style="left:552px;top:279.69px;font-size:11px;color:#000;">75</div><svg class="s" style="left:632px;top:284px;" width="7" height="4" viewBox="0 0 7 4"><polygon points="0,0 7,0 3.5,3.5" fill="#111"/></svg><div class="r" style="left:693px;top:275px;width:95px;height:22px;background:#f8fafd;border:1px solid #a9bdd6"></div><svg class="s" style="left:777px;top:284px;" width="7" height="4" viewBox="0 0 7 4"><polygon points="0,0 7,0 3.5,3.5" fill="#111"/></svg><div class="r" style="left:933px;top:286px;width:191px;height:54px;background:#f0f0f0;border:1px solid #7c7c7c"></div><svg class="s" style="left:940px;top:294px;" width="15" height="11" viewBox="0 0 15 11"><rect x="0.5" y="2.5" width="11" height="7" fill="none" stroke="#000"/><rect x="4.5" y="4.5" width="3" height="3" fill="#fff" stroke="#d10000" stroke-width="0.9"/><rect x="10.5" y="0.5" width="3" height="3" fill="#fff" stroke="#d10000" stroke-width="0.9"/></svg><svg class="s" style="left:965px;top:293px;" width="15" height="13" viewBox="0 0 15 13"><path d="M1 1H14M1 12H14" stroke="#000" stroke-width="1.2"/><path d="M7.5 2V11" stroke="#0a28e6" stroke-width="1.2"/><polygon points="7.5,2 5,5 10,5" fill="#0a28e6"/><polygon points="7.5,11 5,8 10,8" fill="#0a28e6"/></svg><svg class="s" style="left:992px;top:292px;" width="16" height="15" viewBox="0 0 16 15"><path d="M2 13L13 2" stroke="#000"/><rect x="0.5" y="11.5" width="3" height="3" fill="#fff" stroke="#d10000" stroke-width="0.9"/><rect x="11.5" y="0.5" width="3" height="3" fill="#fff" stroke="#d10000" stroke-width="0.9"/></svg><svg class="s" style="left:1020px;top:292px;" width="15" height="15" viewBox="0 0 15 15"><circle cx="7.5" cy="7.5" r="6" fill="none" stroke="#000" stroke-width="1.1"/><path d="M2 14L13 1" stroke="#0a28e6" stroke-width="1.2"/></svg><svg class="s" style="left:1046px;top:290px;" width="18" height="18" viewBox="0 0 18 18"><path d="M2 2L9 9M4 16L16 4" stroke="#00a0e0"/><path d="M4 16L16 4" stroke="#000"/><rect x="0.5" y="0.5" width="3" height="3" fill="#fff" stroke="#d10000" stroke-width="0.9"/><rect x="7.5" y="7.5" width="3" height="3" fill="#fff" stroke="#d10000" stroke-width="0.9"/><text x="11" y="7" font-size="8" fill="#000" font-family="Liberation Sans">?</text></svg><svg class="s" style="left:1075px;top:293px;" width="14" height="14" viewBox="0 0 14 14"><rect x="1.5" y="1.5" width="11" height="11" fill="none" stroke="#888" stroke-dasharray="1 1"/><path d="M7 1V13M1 7H13" stroke="#000" stroke-width="1.1"/></svg><div class="r" style="left:1104px;top:294px;width:10px;height:10px;background:#00c000;border:1px solid #008800"></div><svg class="s" style="left:939px;top:318px;" width="15" height="15" viewBox="0 0 15 15"><circle cx="7.5" cy="7.5" r="4.5" fill="none" stroke="#7a7a7a" stroke-width="3.5"/><rect x="6" y="0" width="3" height="3.5" fill="#7a7a7a" transform="rotate(0 7.5 7.5)"/><rect x="6" y="0" width="3" height="3.5" fill="#7a7a7a" transform="rotate(45 7.5 7.5)"/><rect x="6" y="0" width="3" height="3.5" fill="#7a7a7a" transform="rotate(90 7.5 7.5)"/><rect x="6" y="0" width="3" height="3.5" fill="#7a7a7a" transform="rotate(135 7.5 7.5)"/><rect x="6" y="0" width="3" height="3.5" fill="#7a7a7a" transform="rotate(180 7.5 7.5)"/><rect x="6" y="0" width="3" height="3.5" fill="#7a7a7a" transform="rotate(225 7.5 7.5)"/><rect x="6" y="0" width="3" height="3.5" fill="#7a7a7a" transform="rotate(270 7.5 7.5)"/><rect x="6" y="0" width="3" height="3.5" fill="#7a7a7a" transform="rotate(315 7.5 7.5)"/></svg><div class="r" style="left:933px;top:348px;width:201px;height:297px;background:#f0f0f0;border:1px solid #a0a0a0"></div><div class="r" style="left:937px;top:396px;width:193px;height:1px;background:#a0a0a0"></div><div class="r" style="left:937px;top:397px;width:193px;height:1px;background:#fff"></div><div class="r" style="left:937px;top:615px;width:193px;height:1px;background:#a0a0a0"></div><div class="r" style="left:937px;top:616px;width:193px;height:1px;background:#fff"></div><div class="r" style="left:952px;top:405px;width:176px;height:16px;background:#c5dcf2"></div><div class="t" style="left:959px;top:356.66px;font-size:12.1px;color:#000;">Save To Library...</div><div class="t" style="left:959px;top:377.66px;font-size:12.1px;color:#000;">Open Sketch</div><svg class="s" style="left:1119px;top:379px;" width="5" height="9" viewBox="0 0 5 9"><polygon points="0,0 4.5,4.5 0,9" fill="#000"/></svg><div class="t" style="left:959px;top:406.66px;font-size:12.1px;color:#000;">Line</div><svg class="s" style="left:1119px;top:408px;" width="5" height="9" viewBox="0 0 5 9"><polygon points="0,0 4.5,4.5 0,9" fill="#fff"/></svg><div class="t" style="left:959px;top:427.66px;font-size:12.1px;color:#000;">Arc</div><svg class="s" style="left:1119px;top:429px;" width="5" height="9" viewBox="0 0 5 9"><polygon points="0,0 4.5,4.5 0,9" fill="#000"/></svg><div class="t" style="left:959px;top:448.66px;font-size:12.1px;color:#000;">Circle</div><svg class="s" style="left:1119px;top:450px;" width="5" height="9" viewBox="0 0 5 9"><polygon points="0,0 4.5,4.5 0,9" fill="#000"/></svg><div class="t" style="left:959px;top:469.66px;font-size:12.1px;color:#000;">Trim Lines</div><svg class="s" style="left:1119px;top:471px;" width="5" height="9" viewBox="0 0 5 9"><polygon points="0,0 4.5,4.5 0,9" fill="#000"/></svg><div class="t" style="left:959px;top:490.66px;font-size:12.1px;color:#000;">Add Annotation</div><div class="t" style="left:959px;top:511.66px;font-size:12.1px;color:#000;">Constraints</div><svg class="s" style="left:1119px;top:513px;" width="5" height="9" viewBox="0 0 5 9"><polygon points="0,0 4.5,4.5 0,9" fill="#000"/></svg><div class="t" style="left:959px;top:532.66px;font-size:12.1px;color:#000;">Automatic constraints...</div><div class="t" style="left:959px;top:553.66px;font-size:12.1px;color:#000;">Perpendicular View</div><div class="t" style="left:959px;top:574.66px;font-size:12.1px;color:#000;">OK</div><div class="t" style="left:959px;top:595.66px;font-size:12.1px;color:#000;">Cancel</div><div class="t" style="left:959px;top:625.66px;font-size:12.1px;color:#000;">Properties</div><svg class="s" style="left:936px;top:354px;" width="14" height="14" viewBox="0 0 14 14"><rect x="0.5" y="0.5" width="13" height="13" fill="#222"/><rect x="3" y="1" width="8" height="5" fill="#fff"/><rect x="3" y="8.5" width="8" height="5" fill="#8a8a30"/><rect x="8" y="10" width="2" height="3" fill="#fff"/></svg><svg class="s" style="left:936px;top:373px;" width="14" height="15" viewBox="0 0 14 15"><path d="M1 14V6H6L7 7H11V9" fill="#8a8a30" stroke="#222"/><path d="M1 14L4 9H14L11 14Z" fill="#e8e060" stroke="#222"/><path d="M6 4Q9 0 12 3" fill="none" stroke="#222"/><polygon points="13,1 13,5 10,4" fill="#222"/></svg><svg class="s" style="left:938px;top:405px;" width="12" height="12" viewBox="0 0 12 12"><path d="M2 10L9 3" stroke="#000"/><rect x="0.75" y="8.75" width="2.5" height="2.5" fill="#fff" stroke="#d10000" stroke-width="0.9"/><rect x="8.25" y="1.25" width="2.5" height="2.5" fill="#fff" stroke="#d10000" stroke-width="0.9"/></svg><svg class="s" style="left:937px;top:425px;" width="14" height="14" viewBox="0 0 14 14"><path d="M4 10A5 5 0 1 1 9 5" fill="none" stroke="#000"/><rect x="2.75" y="9.75" width="2.5" height="2.5" fill="#fff" stroke="#d10000" stroke-width="0.9"/><rect x="3.75" y="3.75" width="2.5" height="2.5" fill="#fff" stroke="#d10000" stroke-width="0.9"/><rect x="9.75" y="2.75" width="2.5" height="2.5" fill="#fff" stroke="#d10000" stroke-width="0.9"/></svg><svg class="s" style="left:936px;top:447px;" width="13" height="13" viewBox="0 0 13 13"><circle cx="6.5" cy="6.5" r="5.5" fill="none" stroke="#000"/><rect x="5.25" y="5.25" width="2.5" height="2.5" fill="#fff" stroke="#d10000" stroke-width="0.9"/></svg><svg class="s" style="left:936px;top:467px;" width="15" height="15" viewBox="0 0 15 15"><path d="M1 13L8 2L14 10" fill="none" stroke="#000"/><path d="M2 13L7 6" stroke="#f0c020" stroke-width="2"/></svg><svg class="s" style="left:936px;top:487px;" width="15" height="15" viewBox="0 0 15 15"><text x="9" y="6" font-size="6.5" fill="#000" font-family="Liberation Mono" font-weight="bold" text-anchor="middle">txt</text><path d="M14 8H6L2 13" fill="none" stroke="#1a3ae0"/><polygon points="1,14 2,10 5,13" fill="#1a3ae0"/></svg><svg class="s" style="left:936px;top:509px;" width="15" height="14" viewBox="0 0 15 14"><path d="M1 1V13M14 1V13M2 9H13" stroke="#000"/><path d="M3 9H12" stroke="#a020a0"/><text x="8" y="6" font-size="6" fill="#a020a0" text-anchor="middle" font-family="Liberation Sans">11</text></svg><svg class="s" style="left:936px;top:529px;" width="15" height="15" viewBox="0 0 15 15"><text x="7.5" y="6" font-size="6" font-weight="bold" fill="#000" text-anchor="middle" font-family="Liberation Mono">Auto</text><path d="M1 8V14M14 8V14M2 11H13" stroke="#000"/></svg><svg class="s" style="left:937px;top:551px;" width="14" height="14" viewBox="0 0 14 14"><rect x="1.5" y="1.5" width="11" height="11" fill="none" stroke="#888" stroke-dasharray="1 1"/><path d="M7 1V13M1 7H13" stroke="#000"/></svg><div class="r" style="left:939px;top:572px;width:9px;height:9px;background:#00c000;border:1px solid #008000"></div><svg class="s" style="left:938px;top:593px;" width="10" height="10" viewBox="0 0 10 10"><circle cx="5" cy="5" r="4.5" fill="#c00000"/></svg><svg class="s" style="left:935px;top:621px;" width="17" height="16" viewBox="0 0 17 16"><rect x="1.5" y="4.5" width="11" height="10" fill="#fff" stroke="#222"/><path d="M3 7H11M3 9H11M3 11H11" stroke="#222"/><path d="M5 3L9 1L14 2" fill="none" stroke="#222"/><polygon points="12,0 16,1 14,5" fill="#1a1a90"/></svg><div class="r" style="left:1128px;top:400px;width:165px;height:236px;background:#f0f0f0;border:1px solid #a0a0a0;box-shadow:3px 3px 3px rgba(0,0,0,0.28)"></div><div class="r" style="left:1147px;top:405px;width:143px;height:16px;background:#c5dcf2"></div><div class="t" style="left:1154px;top:406.66px;font-size:12.1px;color:#000;">Polyline</div><div class="t" style="left:1154px;top:427.66px;font-size:12.1px;color:#000;">2 Points</div><div class="t" style="left:1154px;top:448.66px;font-size:12.1px;color:#000;">Open Spline</div><div class="t" style="left:1154px;top:469.66px;font-size:12.1px;color:#000;">Closed Spline</div><div class="t" style="left:1154px;top:490.66px;font-size:12.1px;color:#000;">Curve Equation</div><div class="t" style="left:1154px;top:511.66px;font-size:12.1px;color:#000;">Rectangle</div><div class="t" style="left:1154px;top:532.66px;font-size:12.1px;color:#000;">Two point rectangle</div><div class="t" style="left:1154px;top:553.66px;font-size:12.1px;color:#000;">Rounded rectangle</div><div class="t" style="left:1154px;top:574.66px;font-size:12.1px;color:#000;">N-gon</div><div class="t" style="left:1154px;top:595.66px;font-size:12.1px;color:#000;">Construction line</div><div class="t" style="left:1154px;top:616.66px;font-size:12.1px;color:#000;">Copy to Sketch Plane</div><svg class="s" style="left:1132px;top:404px;" width="16" height="16" viewBox="0 0 16 16"><path d="M2 10L7 3L13 9" fill="none" stroke="#000"/><rect x="0.75" y="8.75" width="2.5" height="2.5" fill="#fff" stroke="#d10000" stroke-width="0.9"/><rect x="5.75" y="1.75" width="2.5" height="2.5" fill="#fff" stroke="#d10000" stroke-width="0.9"/><rect x="11.75" y="7.75" width="2.5" height="2.5" fill="#fff" stroke="#d10000" stroke-width="0.9"/></svg><svg class="s" style="left:1132px;top:425px;" width="16" height="16" viewBox="0 0 16 16"><path d="M2 11L10 3" stroke="#000"/><rect x="0.75" y="9.75" width="2.5" height="2.5" fill="#fff" stroke="#d10000" stroke-width="0.9"/><rect x="8.75" y="1.75" width="2.5" height="2.5" fill="#fff" stroke="#d10000" stroke-width="0.9"/></svg><svg class="s" style="left:1132px;top:446px;" width="16" height="16" viewBox="0 0 16 16"><path d="M11.5 4Q9 0 6.5 2.5Q5 4.5 8 6.5Q10 9 7.5 11.5Q5 13 3 10.5" fill="none" stroke="#000"/><rect x="10.25" y="2.75" width="2.5" height="2.5" fill="#fff" stroke="#d10000" stroke-width="0.9"/><rect x="4.25" y="3.25" width="2.5" height="2.5" fill="#fff" stroke="#d10000" stroke-width="0.9"/><rect x="7.25" y="7.75" width="2.5" height="2.5" fill="#fff" stroke="#d10000" stroke-width="0.9"/><rect x="0.25" y="9.25" width="2.5" height="2.5" fill="#fff" stroke="#d10000" stroke-width="0.9"/></svg><svg class="s" style="left:1132px;top:467px;" width="16" height="16" viewBox="0 0 16 16"><path d="M2 2Q5 1 8 4Q13 6 12 9Q10 13 6 12Q2 9 2 2Z" fill="none" stroke="#000"/><rect x="0.75" y="0.75" width="2.5" height="2.5" fill="#fff" stroke="#d10000" stroke-width="0.9"/><rect x="8.25" y="3.75" width="2.5" height="2.5" fill="#fff" stroke="#d10000" stroke-width="0.9"/><rect x="5.75" y="10.75" width="2.5" height="2.5" fill="#fff" stroke="#d10000" stroke-width="0.9"/></svg><svg class="s" style="left:1132px;top:488px;" width="16" height="16" viewBox="0 0 16 16"><text x="7" y="6" font-size="7" font-weight="bold" fill="#000" font-family="Liberation Serif" font-style="italic" text-anchor="middle">f(x)</text><path d="M2 9.5L7 12.5L13 9.5" fill="none" stroke="#000"/><rect x="0.75" y="8.25" width="2.5" height="2.5" fill="#fff" stroke="#d10000" stroke-width="0.9"/><rect x="5.75" y="11.25" width="2.5" height="2.5" fill="#fff" stroke="#d10000" stroke-width="0.9"/><rect x="11.25" y="8.25" width="2.5" height="2.5" fill="#fff" stroke="#d10000" stroke-width="0.9"/></svg><svg class="s" style="left:1132px;top:509px;" width="16" height="16" viewBox="0 0 16 16"><rect x="1.5" y="1.5" width="11" height="8" fill="none" stroke="#000"/><rect x="0.25" y="0.25" width="2.5" height="2.5" fill="#fff" stroke="#d10000" stroke-width="0.9"/><rect x="11.25" y="0.25" width="2.5" height="2.5" fill="#fff" stroke="#d10000" stroke-width="0.9"/><rect x="5.25" y="8.25" width="2.5" height="2.5" fill="#fff" stroke="#d10000" stroke-width="0.9"/></svg><svg class="s" style="left:1132px;top:530px;" width="16" height="16" viewBox="0 0 16 16"><rect x="1.5" y="2.5" width="10" height="7" fill="none" stroke="#000"/><rect x="4.75" y="4.75" width="2.5" height="2.5" fill="#fff" stroke="#d10000" stroke-width="0.9"/><rect x="10.25" y="1.25" width="2.5" height="2.5" fill="#fff" stroke="#d10000" stroke-width="0.9"/></svg><svg class="s" style="left:1132px;top:551px;" width="16" height="16" viewBox="0 0 16 16"><rect x="1.5" y="1.5" width="11" height="11" rx="3" fill="none" stroke="#000"/><rect x="5.75" y="5.75" width="2.5" height="2.5" fill="#fff" stroke="#d10000" stroke-width="0.9"/><rect x="10.75" y="0.75" width="2.5" height="2.5" fill="#fff" stroke="#d10000" stroke-width="0.9"/></svg><svg class="s" style="left:1132px;top:572px;" width="16" height="16" viewBox="0 0 16 16"><path d="M3 2H10L13 7L10 12H3L1 7Z" fill="none" stroke="#000"/><rect x="1.75" y="0.75" width="2.5" height="2.5" fill="#fff" stroke="#d10000" stroke-width="0.9"/><rect x="8.75" y="0.75" width="2.5" height="2.5" fill="#fff" stroke="#d10000" stroke-width="0.9"/><rect x="11.75" y="5.75" width="2.5" height="2.5" fill="#fff" stroke="#d10000" stroke-width="0.9"/><rect x="8.75" y="10.75" width="2.5" height="2.5" fill="#fff" stroke="#d10000" stroke-width="0.9"/><rect x="1.75" y="10.75" width="2.5" height="2.5" fill="#fff" stroke="#d10000" stroke-width="0.9"/><rect x="-0.25" y="5.75" width="2.5" height="2.5" fill="#fff" stroke="#d10000" stroke-width="0.9"/></svg><svg class="s" style="left:1132px;top:593px;" width="16" height="16" viewBox="0 0 16 16"><path d="M2 11L10 3" stroke="#000"/><rect x="0.75" y="9.75" width="2.5" height="2.5" fill="#fff" stroke="#d10000" stroke-width="0.9"/><rect x="8.75" y="1.75" width="2.5" height="2.5" fill="#fff" stroke="#d10000" stroke-width="0.9"/></svg><svg class="s" style="left:1132px;top:614px;" width="16" height="16" viewBox="0 0 16 16"><path d="M3 3V9" stroke="#1a1a90" stroke-width="1.3"/><polygon points="0.5,8 5.5,8 3,12" fill="#1a1a90"/><path d="M7 13L9 9H15L13 13Z" fill="none" stroke="#000"/><rect x="8.5" y="2.5" width="6" height="5" fill="#ccc" stroke="#000"/><path d="M8.5 2.5L10 1H16V6L14.5 7.5" fill="none" stroke="#000"/></svg><div class="r" style="left:51px;top:632px;width:140px;height:142px;background:#f0f0f0;border:1px solid #a0a0a0;box-shadow:3px 3px 3px rgba(0,0,0,0.28)"></div><div class="r" style="left:55px;top:658px;width:132px;height:1px;background:#a0a0a0"></div><div class="r" style="left:55px;top:659px;width:132px;height:1px;background:#fff"></div><div class="r" style="left:55px;top:687px;width:132px;height:1px;background:#a0a0a0"></div><div class="r" style="left:55px;top:688px;width:132px;height:1px;background:#fff"></div><div class="r" style="left:55px;top:716px;width:132px;height:1px;background:#a0a0a0"></div><div class="r" style="left:55px;top:717px;width:132px;height:1px;background:#fff"></div><div class="r" style="left:55px;top:745px;width:132px;height:1px;background:#a0a0a0"></div><div class="r" style="left:55px;top:746px;width:132px;height:1px;background:#fff"></div><div class="r" style="left:74px;top:695px;width:114px;height:15px;background:#c5dcf2"></div><div class="t" style="left:78px;top:639.26px;font-size:12.1px;color:#000;">Edit</div><div class="t" style="left:78px;top:667.96px;font-size:12.1px;color:#000;">Disable</div><div class="t" style="left:78px;top:696.96px;font-size:12.1px;color:#000;">Delete</div><div class="t" style="left:78px;top:725.96px;font-size:12.1px;color:#000;">Rename</div><div class="t" style="left:78px;top:754.96px;font-size:12.1px;color:#000;">Edit sort order</div><div class="r" style="left:2px;top:931px;width:1452px;height:23px;background:#f0f0f0"></div><div class="r" style="left:0px;top:954px;width:1454px;height:6px;background:#fff"></div><div class="t" style="left:7px;top:937.69px;font-size:11px;color:#000;">Ready (press F1 for help)</div><div class="r" style="left:678px;top:933px;width:1px;height:20px;background:#d2d2d2"></div><div class="r" style="left:1233px;top:933px;width:1px;height:20px;background:#d2d2d2"></div><div class="r" style="left:1313px;top:933px;width:1px;height:20px;background:#d2d2d2"></div><div class="r" style="left:1383px;top:933px;width:1px;height:20px;background:#d2d2d2"></div><div class="t" style="left:1248px;top:937.69px;font-size:11px;color:#000;">dx 50.76</div><div class="t" style="left:1318px;top:937.69px;font-size:11px;color:#000;">dy 6.77</div><svg class="s" style="left:1443px;top:943px;" width="10" height="10" viewBox="0 0 10 10"><rect x="7" y="1" width="2" height="2" fill="#b8b8b8"/><rect x="4" y="4" width="2" height="2" fill="#b8b8b8"/><rect x="7" y="4" width="2" height="2" fill="#b8b8b8"/><rect x="1" y="7" width="2" height="2" fill="#b8b8b8"/><rect x="4" y="7" width="2" height="2" fill="#b8b8b8"/><rect x="7" y="7" width="2" height="2" fill="#b8b8b8"/></svg><div class="ann" style="left:42px;top:26.7px;font-size:28px"><svg width="15.57" height="28" style="vertical-align:top;overflow:visible"><path d="M7.4 3H11.6V23H7.4V8.6Q5 10.6 2.2 11.6V7.6Q5.6 6 7.4 3Z" fill="#800000" stroke="#fff" stroke-width="2" paint-order="stroke"/></svg>)</div><div class="ann" style="left:496.3px;top:82.8px;font-size:28px">2)</div><div class="ann" style="left:145.8px;top:3px;font-size:28px">3)</div><div class="ann" style="left:741px;top:153px;font-size:28px">4)</div><div class="ann" style="left:1249.3px;top:111.8px;font-size:28px">5)</div><div class="ann" style="left:1080.3px;top:418px;font-size:28px">6)</div><div class="ann" style="left:146.3px;top:660px;font-size:28px">6)</div><div class="ann" style="left:1053.3px;top:308px;font-size:28px">7)</div><div class="ann" style="left:123.3px;top:329px;font-size:28px">8)</div><div class="ann" style="left:146.3px;top:921px;font-size:28px">9)</div><div class="ann" style="left:803px;top:735px;font-size:28px"><svg width="15.57" height="28" style="vertical-align:top;overflow:visible"><path d="M7.4 3H11.6V23H7.4V8.6Q5 10.6 2.2 11.6V7.6Q5.6 6 7.4 3Z" fill="#800000" stroke="#fff" stroke-width="2" paint-order="stroke"/></svg>0)</div><div class="ann" style="left:646.75px;top:271px;font-size:28px"><svg width="15.57" height="28" style="vertical-align:top;overflow:visible"><path d="M7.4 3H11.6V23H7.4V8.6Q5 10.6 2.2 11.6V7.6Q5.6 6 7.4 3Z" fill="#800000" stroke="#fff" stroke-width="2" paint-order="stroke"/></svg><svg width="15.57" height="28" style="vertical-align:top;overflow:visible"><path d="M7.4 3H11.6V23H7.4V8.6Q5 10.6 2.2 11.6V7.6Q5.6 6 7.4 3Z" fill="#800000" stroke="#fff" stroke-width="2" paint-order="stroke"/></svg>)</div><div class="ann" style="left:120px;top:461px;font-size:28px"><svg width="15.57" height="28" style="vertical-align:top;overflow:visible"><path d="M7.4 3H11.6V23H7.4V8.6Q5 10.6 2.2 11.6V7.6Q5.6 6 7.4 3Z" fill="#800000" stroke="#fff" stroke-width="2" paint-order="stroke"/></svg>4)</div><div class="ann" style="left:243px;top:186px;font-size:28px"><svg width="15.57" height="28" style="vertical-align:top;overflow:visible"><path d="M7.4 3H11.6V23H7.4V8.6Q5 10.6 2.2 11.6V7.6Q5.6 6 7.4 3Z" fill="#800000" stroke="#fff" stroke-width="2" paint-order="stroke"/></svg>5)</div></body></html>
